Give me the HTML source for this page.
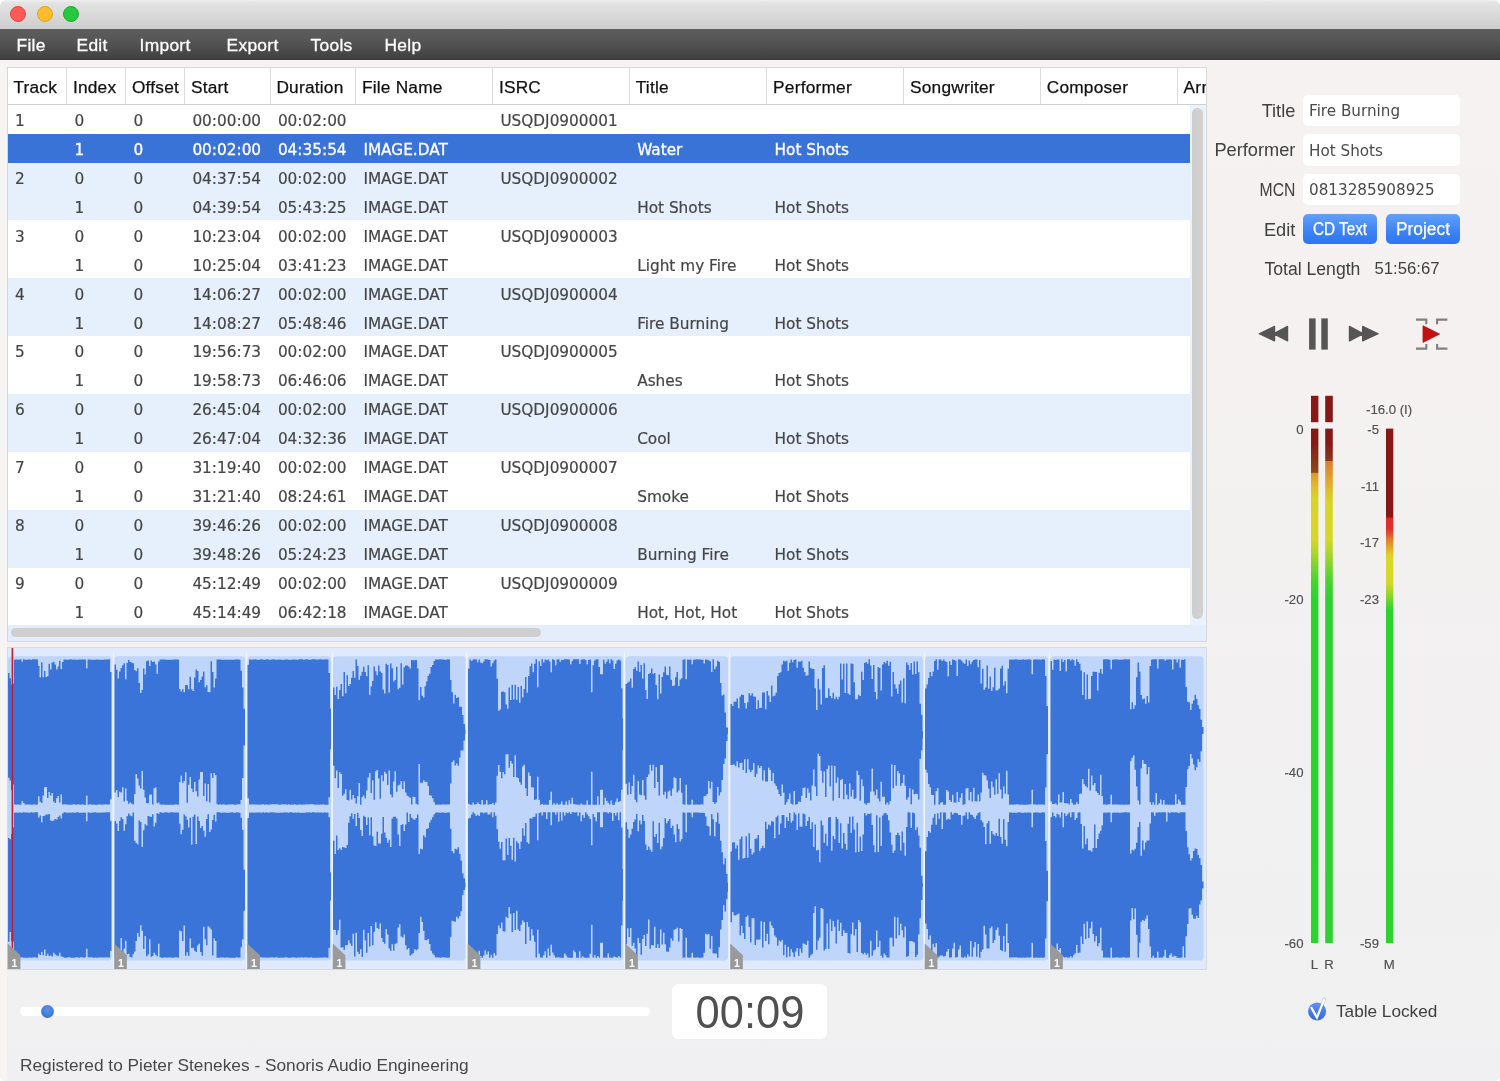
<!DOCTYPE html>
<html lang="en"><head><meta charset="utf-8"><title>Sonoris DDP Creator</title>
<style>
html,body{margin:0;padding:0;background:#fff;}
body{width:1500px;height:1081px;overflow:hidden;position:relative;}
#win{position:absolute;left:0;top:0;width:1500px;height:1081px;border-radius:6px 6px 5px 5px;overflow:hidden;will-change:transform;background:linear-gradient(#f6f2f1 60px,#f4f1f0 400px,#f1f0f1 900px,#f0f0f2);}
.t{position:absolute;white-space:nowrap;}
.b{position:absolute;box-sizing:border-box;}
svg{position:absolute;left:0;top:0;}
</style></head><body><div id="win">

<div class="b" style="left:0px;top:0px;width:1500px;height:30px;background:linear-gradient(#f0f0f0,#e3e3e3 9%,#cccccc);"></div>
<div class="b" style="left:0px;top:60px;width:7px;height:1021px;background:#f6f5f4;"></div>
<div class="b" style="left:10.3px;top:6.300000000000001px;width:16px;height:16px;border-radius:50%;background:#fc5b57;border:1px solid #e0443e;"></div>
<div class="b" style="left:36.7px;top:6.300000000000001px;width:16px;height:16px;border-radius:50%;background:#fdbc2e;border:1px solid #dea123;"></div>
<div class="b" style="left:63px;top:6.300000000000001px;width:16px;height:16px;border-radius:50%;background:#27c93f;border:1px solid #1aab29;"></div>
<div class="b" style="left:0px;top:29.2px;width:1500px;height:31.2px;background:linear-gradient(#5d5d5d,#565656 35%,#4a4a4a 70%,#434242 92%,#3b3b3b);"></div>
<div class="t" style="top:36.87px;font-size:17.4px;line-height:17.4px;color:#fff;font-family:'Liberation Sans', sans-serif;letter-spacing:0.3px;left:16.50px;-webkit-text-stroke:0.3px #fff;">File</div>
<div class="t" style="top:36.87px;font-size:17.4px;line-height:17.4px;color:#fff;font-family:'Liberation Sans', sans-serif;letter-spacing:0.3px;left:76.50px;-webkit-text-stroke:0.3px #fff;">Edit</div>
<div class="t" style="top:36.87px;font-size:17.4px;line-height:17.4px;color:#fff;font-family:'Liberation Sans', sans-serif;letter-spacing:0.3px;left:139.50px;-webkit-text-stroke:0.3px #fff;">Import</div>
<div class="t" style="top:36.87px;font-size:17.4px;line-height:17.4px;color:#fff;font-family:'Liberation Sans', sans-serif;letter-spacing:0.3px;left:226.50px;-webkit-text-stroke:0.3px #fff;">Export</div>
<div class="t" style="top:36.87px;font-size:17.4px;line-height:17.4px;color:#fff;font-family:'Liberation Sans', sans-serif;letter-spacing:0.3px;left:310.50px;-webkit-text-stroke:0.3px #fff;">Tools</div>
<div class="t" style="top:36.87px;font-size:17.4px;line-height:17.4px;color:#fff;font-family:'Liberation Sans', sans-serif;letter-spacing:0.3px;left:384.50px;-webkit-text-stroke:0.3px #fff;">Help</div>
<div class="b" style="left:7px;top:67px;width:1200px;height:575px;background:#fff;border:1px solid #d6d8dc;"></div>
<div class="b" style="left:8px;top:133.6px;width:1182px;height:28.93px;background:#3a73d8;"></div>
<div class="b" style="left:8px;top:162.6px;width:1182px;height:28.93px;background:#e6f0fd;"></div>
<div class="b" style="left:8px;top:191.5px;width:1182px;height:28.93px;background:#e6f0fd;"></div>
<div class="b" style="left:8px;top:278.3px;width:1182px;height:28.93px;background:#e6f0fd;"></div>
<div class="b" style="left:8px;top:307.2px;width:1182px;height:28.93px;background:#e6f0fd;"></div>
<div class="b" style="left:8px;top:394.0px;width:1182px;height:28.93px;background:#e6f0fd;"></div>
<div class="b" style="left:8px;top:422.9px;width:1182px;height:28.93px;background:#e6f0fd;"></div>
<div class="b" style="left:8px;top:509.7px;width:1182px;height:28.93px;background:#e6f0fd;"></div>
<div class="b" style="left:8px;top:538.6px;width:1182px;height:28.93px;background:#e6f0fd;"></div>
<div class="b" style="left:1190px;top:105px;width:16px;height:536px;background:#eaf2fd;"></div>
<div class="b" style="left:8px;top:625.4px;width:1198px;height:15.6px;background:#e4edfc;"></div>
<div class="b" style="left:1192.2px;top:108px;width:11px;height:511px;background:linear-gradient(90deg,#cdcdcd,#d2d2d2);border-radius:5.5px;"></div>
<div class="b" style="left:11px;top:627.7px;width:530px;height:9.6px;background:#cfcfcf;border-radius:5px;"></div>
<div class="b" style="left:8px;top:68px;width:1198px;height:37px;background:#fff;border-bottom:1px solid #d0d0d0;"></div>
<div class="b" style="left:66.0px;top:68px;width:1px;height:36px;background:#dcdcdc;"></div>
<div class="b" style="left:125.0px;top:68px;width:1px;height:36px;background:#dcdcdc;"></div>
<div class="b" style="left:184.0px;top:68px;width:1px;height:36px;background:#dcdcdc;"></div>
<div class="b" style="left:269.5px;top:68px;width:1px;height:36px;background:#dcdcdc;"></div>
<div class="b" style="left:355.0px;top:68px;width:1px;height:36px;background:#dcdcdc;"></div>
<div class="b" style="left:492.0px;top:68px;width:1px;height:36px;background:#dcdcdc;"></div>
<div class="b" style="left:628.8px;top:68px;width:1px;height:36px;background:#dcdcdc;"></div>
<div class="b" style="left:766.2px;top:68px;width:1px;height:36px;background:#dcdcdc;"></div>
<div class="b" style="left:903.1px;top:68px;width:1px;height:36px;background:#dcdcdc;"></div>
<div class="b" style="left:1039.8px;top:68px;width:1px;height:36px;background:#dcdcdc;"></div>
<div class="b" style="left:1176.5px;top:68px;width:1px;height:36px;background:#dcdcdc;"></div>
<div class="t" style="top:78.66px;font-size:17.3px;line-height:17.3px;color:#111;font-family:'Liberation Sans', sans-serif;letter-spacing:0.22px;left:13.40px;-webkit-text-stroke:0.25px #111;">Track</div>
<div class="t" style="top:78.66px;font-size:17.3px;line-height:17.3px;color:#111;font-family:'Liberation Sans', sans-serif;letter-spacing:0.22px;left:72.90px;-webkit-text-stroke:0.25px #111;">Index</div>
<div class="t" style="top:78.66px;font-size:17.3px;line-height:17.3px;color:#111;font-family:'Liberation Sans', sans-serif;letter-spacing:0.22px;left:131.90px;-webkit-text-stroke:0.25px #111;">Offset</div>
<div class="t" style="top:78.66px;font-size:17.3px;line-height:17.3px;color:#111;font-family:'Liberation Sans', sans-serif;letter-spacing:0.22px;left:190.90px;-webkit-text-stroke:0.25px #111;">Start</div>
<div class="t" style="top:78.66px;font-size:17.3px;line-height:17.3px;color:#111;font-family:'Liberation Sans', sans-serif;letter-spacing:0.22px;left:276.40px;-webkit-text-stroke:0.25px #111;">Duration</div>
<div class="t" style="top:78.66px;font-size:17.3px;line-height:17.3px;color:#111;font-family:'Liberation Sans', sans-serif;letter-spacing:0.22px;left:361.90px;-webkit-text-stroke:0.25px #111;">File Name</div>
<div class="t" style="top:78.66px;font-size:17.3px;line-height:17.3px;color:#111;font-family:'Liberation Sans', sans-serif;letter-spacing:0.22px;left:498.90px;-webkit-text-stroke:0.25px #111;">ISRC</div>
<div class="t" style="top:78.66px;font-size:17.3px;line-height:17.3px;color:#111;font-family:'Liberation Sans', sans-serif;letter-spacing:0.22px;left:635.70px;-webkit-text-stroke:0.25px #111;">Title</div>
<div class="t" style="top:78.66px;font-size:17.3px;line-height:17.3px;color:#111;font-family:'Liberation Sans', sans-serif;letter-spacing:0.22px;left:773.10px;-webkit-text-stroke:0.25px #111;">Performer</div>
<div class="t" style="top:78.66px;font-size:17.3px;line-height:17.3px;color:#111;font-family:'Liberation Sans', sans-serif;letter-spacing:0.22px;left:910.00px;-webkit-text-stroke:0.25px #111;">Songwriter</div>
<div class="t" style="top:78.66px;font-size:17.3px;line-height:17.3px;color:#111;font-family:'Liberation Sans', sans-serif;letter-spacing:0.22px;left:1046.70px;-webkit-text-stroke:0.25px #111;">Composer</div>
<div class="b" style="left:1177px;top:68px;width:28.5px;height:36px;overflow:hidden;">
<div class="t" style="left:6.5px;top:10.66px;font-size:17.3px;line-height:17.3px;color:#111;letter-spacing:0.3px;-webkit-text-stroke:0.25px #111;font-family:'Liberation Sans', sans-serif;">Arranger</div></div>
<div class="t" style="top:114.05px;font-size:15.3px;line-height:15.3px;color:#464646;font-family:'DejaVu Sans', 'Liberation Sans', sans-serif;left:14.90px;-webkit-text-stroke:0.2px #464646;">1</div>
<div class="t" style="top:114.05px;font-size:15.3px;line-height:15.3px;color:#464646;font-family:'DejaVu Sans', 'Liberation Sans', sans-serif;left:74.40px;-webkit-text-stroke:0.2px #464646;">0</div>
<div class="t" style="top:114.05px;font-size:15.3px;line-height:15.3px;color:#464646;font-family:'DejaVu Sans', 'Liberation Sans', sans-serif;left:133.40px;-webkit-text-stroke:0.2px #464646;">0</div>
<div class="t" style="top:114.05px;font-size:15.3px;line-height:15.3px;color:#464646;font-family:'DejaVu Sans', 'Liberation Sans', sans-serif;left:192.40px;-webkit-text-stroke:0.2px #464646;">00:00:00</div>
<div class="t" style="top:114.05px;font-size:15.3px;line-height:15.3px;color:#464646;font-family:'DejaVu Sans', 'Liberation Sans', sans-serif;left:277.90px;-webkit-text-stroke:0.2px #464646;">00:02:00</div>
<div class="t" style="top:114.05px;font-size:15.3px;line-height:15.3px;color:#464646;font-family:'DejaVu Sans', 'Liberation Sans', sans-serif;left:500.40px;-webkit-text-stroke:0.2px #464646;">USQDJ0900001</div>
<div class="t" style="top:142.98px;font-size:15.3px;line-height:15.3px;color:#fff;font-family:'DejaVu Sans', 'Liberation Sans', sans-serif;left:74.40px;-webkit-text-stroke:0.3px #fff;">1</div>
<div class="t" style="top:142.98px;font-size:15.3px;line-height:15.3px;color:#fff;font-family:'DejaVu Sans', 'Liberation Sans', sans-serif;left:133.40px;-webkit-text-stroke:0.3px #fff;">0</div>
<div class="t" style="top:142.98px;font-size:15.3px;line-height:15.3px;color:#fff;font-family:'DejaVu Sans', 'Liberation Sans', sans-serif;left:192.40px;-webkit-text-stroke:0.3px #fff;">00:02:00</div>
<div class="t" style="top:142.98px;font-size:15.3px;line-height:15.3px;color:#fff;font-family:'DejaVu Sans', 'Liberation Sans', sans-serif;left:277.90px;-webkit-text-stroke:0.3px #fff;">04:35:54</div>
<div class="t" style="top:142.98px;font-size:15.3px;line-height:15.3px;color:#fff;font-family:'DejaVu Sans', 'Liberation Sans', sans-serif;left:363.40px;-webkit-text-stroke:0.3px #fff;">IMAGE.DAT</div>
<div class="t" style="top:142.98px;font-size:15.3px;line-height:15.3px;color:#fff;font-family:'DejaVu Sans', 'Liberation Sans', sans-serif;left:637.20px;-webkit-text-stroke:0.3px #fff;">Water</div>
<div class="t" style="top:142.98px;font-size:15.3px;line-height:15.3px;color:#fff;font-family:'DejaVu Sans', 'Liberation Sans', sans-serif;left:774.60px;-webkit-text-stroke:0.3px #fff;">Hot Shots</div>
<div class="t" style="top:171.91px;font-size:15.3px;line-height:15.3px;color:#464646;font-family:'DejaVu Sans', 'Liberation Sans', sans-serif;left:14.90px;-webkit-text-stroke:0.2px #464646;">2</div>
<div class="t" style="top:171.91px;font-size:15.3px;line-height:15.3px;color:#464646;font-family:'DejaVu Sans', 'Liberation Sans', sans-serif;left:74.40px;-webkit-text-stroke:0.2px #464646;">0</div>
<div class="t" style="top:171.91px;font-size:15.3px;line-height:15.3px;color:#464646;font-family:'DejaVu Sans', 'Liberation Sans', sans-serif;left:133.40px;-webkit-text-stroke:0.2px #464646;">0</div>
<div class="t" style="top:171.91px;font-size:15.3px;line-height:15.3px;color:#464646;font-family:'DejaVu Sans', 'Liberation Sans', sans-serif;left:192.40px;-webkit-text-stroke:0.2px #464646;">04:37:54</div>
<div class="t" style="top:171.91px;font-size:15.3px;line-height:15.3px;color:#464646;font-family:'DejaVu Sans', 'Liberation Sans', sans-serif;left:277.90px;-webkit-text-stroke:0.2px #464646;">00:02:00</div>
<div class="t" style="top:171.91px;font-size:15.3px;line-height:15.3px;color:#464646;font-family:'DejaVu Sans', 'Liberation Sans', sans-serif;left:363.40px;-webkit-text-stroke:0.2px #464646;">IMAGE.DAT</div>
<div class="t" style="top:171.91px;font-size:15.3px;line-height:15.3px;color:#464646;font-family:'DejaVu Sans', 'Liberation Sans', sans-serif;left:500.40px;-webkit-text-stroke:0.2px #464646;">USQDJ0900002</div>
<div class="t" style="top:200.84px;font-size:15.3px;line-height:15.3px;color:#464646;font-family:'DejaVu Sans', 'Liberation Sans', sans-serif;left:74.40px;-webkit-text-stroke:0.2px #464646;">1</div>
<div class="t" style="top:200.84px;font-size:15.3px;line-height:15.3px;color:#464646;font-family:'DejaVu Sans', 'Liberation Sans', sans-serif;left:133.40px;-webkit-text-stroke:0.2px #464646;">0</div>
<div class="t" style="top:200.84px;font-size:15.3px;line-height:15.3px;color:#464646;font-family:'DejaVu Sans', 'Liberation Sans', sans-serif;left:192.40px;-webkit-text-stroke:0.2px #464646;">04:39:54</div>
<div class="t" style="top:200.84px;font-size:15.3px;line-height:15.3px;color:#464646;font-family:'DejaVu Sans', 'Liberation Sans', sans-serif;left:277.90px;-webkit-text-stroke:0.2px #464646;">05:43:25</div>
<div class="t" style="top:200.84px;font-size:15.3px;line-height:15.3px;color:#464646;font-family:'DejaVu Sans', 'Liberation Sans', sans-serif;left:363.40px;-webkit-text-stroke:0.2px #464646;">IMAGE.DAT</div>
<div class="t" style="top:200.84px;font-size:15.3px;line-height:15.3px;color:#464646;font-family:'DejaVu Sans', 'Liberation Sans', sans-serif;left:637.20px;-webkit-text-stroke:0.2px #464646;">Hot Shots</div>
<div class="t" style="top:200.84px;font-size:15.3px;line-height:15.3px;color:#464646;font-family:'DejaVu Sans', 'Liberation Sans', sans-serif;left:774.60px;-webkit-text-stroke:0.2px #464646;">Hot Shots</div>
<div class="t" style="top:229.77px;font-size:15.3px;line-height:15.3px;color:#464646;font-family:'DejaVu Sans', 'Liberation Sans', sans-serif;left:14.90px;-webkit-text-stroke:0.2px #464646;">3</div>
<div class="t" style="top:229.77px;font-size:15.3px;line-height:15.3px;color:#464646;font-family:'DejaVu Sans', 'Liberation Sans', sans-serif;left:74.40px;-webkit-text-stroke:0.2px #464646;">0</div>
<div class="t" style="top:229.77px;font-size:15.3px;line-height:15.3px;color:#464646;font-family:'DejaVu Sans', 'Liberation Sans', sans-serif;left:133.40px;-webkit-text-stroke:0.2px #464646;">0</div>
<div class="t" style="top:229.77px;font-size:15.3px;line-height:15.3px;color:#464646;font-family:'DejaVu Sans', 'Liberation Sans', sans-serif;left:192.40px;-webkit-text-stroke:0.2px #464646;">10:23:04</div>
<div class="t" style="top:229.77px;font-size:15.3px;line-height:15.3px;color:#464646;font-family:'DejaVu Sans', 'Liberation Sans', sans-serif;left:277.90px;-webkit-text-stroke:0.2px #464646;">00:02:00</div>
<div class="t" style="top:229.77px;font-size:15.3px;line-height:15.3px;color:#464646;font-family:'DejaVu Sans', 'Liberation Sans', sans-serif;left:363.40px;-webkit-text-stroke:0.2px #464646;">IMAGE.DAT</div>
<div class="t" style="top:229.77px;font-size:15.3px;line-height:15.3px;color:#464646;font-family:'DejaVu Sans', 'Liberation Sans', sans-serif;left:500.40px;-webkit-text-stroke:0.2px #464646;">USQDJ0900003</div>
<div class="t" style="top:258.70px;font-size:15.3px;line-height:15.3px;color:#464646;font-family:'DejaVu Sans', 'Liberation Sans', sans-serif;left:74.40px;-webkit-text-stroke:0.2px #464646;">1</div>
<div class="t" style="top:258.70px;font-size:15.3px;line-height:15.3px;color:#464646;font-family:'DejaVu Sans', 'Liberation Sans', sans-serif;left:133.40px;-webkit-text-stroke:0.2px #464646;">0</div>
<div class="t" style="top:258.70px;font-size:15.3px;line-height:15.3px;color:#464646;font-family:'DejaVu Sans', 'Liberation Sans', sans-serif;left:192.40px;-webkit-text-stroke:0.2px #464646;">10:25:04</div>
<div class="t" style="top:258.70px;font-size:15.3px;line-height:15.3px;color:#464646;font-family:'DejaVu Sans', 'Liberation Sans', sans-serif;left:277.90px;-webkit-text-stroke:0.2px #464646;">03:41:23</div>
<div class="t" style="top:258.70px;font-size:15.3px;line-height:15.3px;color:#464646;font-family:'DejaVu Sans', 'Liberation Sans', sans-serif;left:363.40px;-webkit-text-stroke:0.2px #464646;">IMAGE.DAT</div>
<div class="t" style="top:258.70px;font-size:15.3px;line-height:15.3px;color:#464646;font-family:'DejaVu Sans', 'Liberation Sans', sans-serif;left:637.20px;-webkit-text-stroke:0.2px #464646;">Light my Fire</div>
<div class="t" style="top:258.70px;font-size:15.3px;line-height:15.3px;color:#464646;font-family:'DejaVu Sans', 'Liberation Sans', sans-serif;left:774.60px;-webkit-text-stroke:0.2px #464646;">Hot Shots</div>
<div class="t" style="top:287.63px;font-size:15.3px;line-height:15.3px;color:#464646;font-family:'DejaVu Sans', 'Liberation Sans', sans-serif;left:14.90px;-webkit-text-stroke:0.2px #464646;">4</div>
<div class="t" style="top:287.63px;font-size:15.3px;line-height:15.3px;color:#464646;font-family:'DejaVu Sans', 'Liberation Sans', sans-serif;left:74.40px;-webkit-text-stroke:0.2px #464646;">0</div>
<div class="t" style="top:287.63px;font-size:15.3px;line-height:15.3px;color:#464646;font-family:'DejaVu Sans', 'Liberation Sans', sans-serif;left:133.40px;-webkit-text-stroke:0.2px #464646;">0</div>
<div class="t" style="top:287.63px;font-size:15.3px;line-height:15.3px;color:#464646;font-family:'DejaVu Sans', 'Liberation Sans', sans-serif;left:192.40px;-webkit-text-stroke:0.2px #464646;">14:06:27</div>
<div class="t" style="top:287.63px;font-size:15.3px;line-height:15.3px;color:#464646;font-family:'DejaVu Sans', 'Liberation Sans', sans-serif;left:277.90px;-webkit-text-stroke:0.2px #464646;">00:02:00</div>
<div class="t" style="top:287.63px;font-size:15.3px;line-height:15.3px;color:#464646;font-family:'DejaVu Sans', 'Liberation Sans', sans-serif;left:363.40px;-webkit-text-stroke:0.2px #464646;">IMAGE.DAT</div>
<div class="t" style="top:287.63px;font-size:15.3px;line-height:15.3px;color:#464646;font-family:'DejaVu Sans', 'Liberation Sans', sans-serif;left:500.40px;-webkit-text-stroke:0.2px #464646;">USQDJ0900004</div>
<div class="t" style="top:316.56px;font-size:15.3px;line-height:15.3px;color:#464646;font-family:'DejaVu Sans', 'Liberation Sans', sans-serif;left:74.40px;-webkit-text-stroke:0.2px #464646;">1</div>
<div class="t" style="top:316.56px;font-size:15.3px;line-height:15.3px;color:#464646;font-family:'DejaVu Sans', 'Liberation Sans', sans-serif;left:133.40px;-webkit-text-stroke:0.2px #464646;">0</div>
<div class="t" style="top:316.56px;font-size:15.3px;line-height:15.3px;color:#464646;font-family:'DejaVu Sans', 'Liberation Sans', sans-serif;left:192.40px;-webkit-text-stroke:0.2px #464646;">14:08:27</div>
<div class="t" style="top:316.56px;font-size:15.3px;line-height:15.3px;color:#464646;font-family:'DejaVu Sans', 'Liberation Sans', sans-serif;left:277.90px;-webkit-text-stroke:0.2px #464646;">05:48:46</div>
<div class="t" style="top:316.56px;font-size:15.3px;line-height:15.3px;color:#464646;font-family:'DejaVu Sans', 'Liberation Sans', sans-serif;left:363.40px;-webkit-text-stroke:0.2px #464646;">IMAGE.DAT</div>
<div class="t" style="top:316.56px;font-size:15.3px;line-height:15.3px;color:#464646;font-family:'DejaVu Sans', 'Liberation Sans', sans-serif;left:637.20px;-webkit-text-stroke:0.2px #464646;">Fire Burning</div>
<div class="t" style="top:316.56px;font-size:15.3px;line-height:15.3px;color:#464646;font-family:'DejaVu Sans', 'Liberation Sans', sans-serif;left:774.60px;-webkit-text-stroke:0.2px #464646;">Hot Shots</div>
<div class="t" style="top:345.49px;font-size:15.3px;line-height:15.3px;color:#464646;font-family:'DejaVu Sans', 'Liberation Sans', sans-serif;left:14.90px;-webkit-text-stroke:0.2px #464646;">5</div>
<div class="t" style="top:345.49px;font-size:15.3px;line-height:15.3px;color:#464646;font-family:'DejaVu Sans', 'Liberation Sans', sans-serif;left:74.40px;-webkit-text-stroke:0.2px #464646;">0</div>
<div class="t" style="top:345.49px;font-size:15.3px;line-height:15.3px;color:#464646;font-family:'DejaVu Sans', 'Liberation Sans', sans-serif;left:133.40px;-webkit-text-stroke:0.2px #464646;">0</div>
<div class="t" style="top:345.49px;font-size:15.3px;line-height:15.3px;color:#464646;font-family:'DejaVu Sans', 'Liberation Sans', sans-serif;left:192.40px;-webkit-text-stroke:0.2px #464646;">19:56:73</div>
<div class="t" style="top:345.49px;font-size:15.3px;line-height:15.3px;color:#464646;font-family:'DejaVu Sans', 'Liberation Sans', sans-serif;left:277.90px;-webkit-text-stroke:0.2px #464646;">00:02:00</div>
<div class="t" style="top:345.49px;font-size:15.3px;line-height:15.3px;color:#464646;font-family:'DejaVu Sans', 'Liberation Sans', sans-serif;left:363.40px;-webkit-text-stroke:0.2px #464646;">IMAGE.DAT</div>
<div class="t" style="top:345.49px;font-size:15.3px;line-height:15.3px;color:#464646;font-family:'DejaVu Sans', 'Liberation Sans', sans-serif;left:500.40px;-webkit-text-stroke:0.2px #464646;">USQDJ0900005</div>
<div class="t" style="top:374.42px;font-size:15.3px;line-height:15.3px;color:#464646;font-family:'DejaVu Sans', 'Liberation Sans', sans-serif;left:74.40px;-webkit-text-stroke:0.2px #464646;">1</div>
<div class="t" style="top:374.42px;font-size:15.3px;line-height:15.3px;color:#464646;font-family:'DejaVu Sans', 'Liberation Sans', sans-serif;left:133.40px;-webkit-text-stroke:0.2px #464646;">0</div>
<div class="t" style="top:374.42px;font-size:15.3px;line-height:15.3px;color:#464646;font-family:'DejaVu Sans', 'Liberation Sans', sans-serif;left:192.40px;-webkit-text-stroke:0.2px #464646;">19:58:73</div>
<div class="t" style="top:374.42px;font-size:15.3px;line-height:15.3px;color:#464646;font-family:'DejaVu Sans', 'Liberation Sans', sans-serif;left:277.90px;-webkit-text-stroke:0.2px #464646;">06:46:06</div>
<div class="t" style="top:374.42px;font-size:15.3px;line-height:15.3px;color:#464646;font-family:'DejaVu Sans', 'Liberation Sans', sans-serif;left:363.40px;-webkit-text-stroke:0.2px #464646;">IMAGE.DAT</div>
<div class="t" style="top:374.42px;font-size:15.3px;line-height:15.3px;color:#464646;font-family:'DejaVu Sans', 'Liberation Sans', sans-serif;left:637.20px;-webkit-text-stroke:0.2px #464646;">Ashes</div>
<div class="t" style="top:374.42px;font-size:15.3px;line-height:15.3px;color:#464646;font-family:'DejaVu Sans', 'Liberation Sans', sans-serif;left:774.60px;-webkit-text-stroke:0.2px #464646;">Hot Shots</div>
<div class="t" style="top:403.35px;font-size:15.3px;line-height:15.3px;color:#464646;font-family:'DejaVu Sans', 'Liberation Sans', sans-serif;left:14.90px;-webkit-text-stroke:0.2px #464646;">6</div>
<div class="t" style="top:403.35px;font-size:15.3px;line-height:15.3px;color:#464646;font-family:'DejaVu Sans', 'Liberation Sans', sans-serif;left:74.40px;-webkit-text-stroke:0.2px #464646;">0</div>
<div class="t" style="top:403.35px;font-size:15.3px;line-height:15.3px;color:#464646;font-family:'DejaVu Sans', 'Liberation Sans', sans-serif;left:133.40px;-webkit-text-stroke:0.2px #464646;">0</div>
<div class="t" style="top:403.35px;font-size:15.3px;line-height:15.3px;color:#464646;font-family:'DejaVu Sans', 'Liberation Sans', sans-serif;left:192.40px;-webkit-text-stroke:0.2px #464646;">26:45:04</div>
<div class="t" style="top:403.35px;font-size:15.3px;line-height:15.3px;color:#464646;font-family:'DejaVu Sans', 'Liberation Sans', sans-serif;left:277.90px;-webkit-text-stroke:0.2px #464646;">00:02:00</div>
<div class="t" style="top:403.35px;font-size:15.3px;line-height:15.3px;color:#464646;font-family:'DejaVu Sans', 'Liberation Sans', sans-serif;left:363.40px;-webkit-text-stroke:0.2px #464646;">IMAGE.DAT</div>
<div class="t" style="top:403.35px;font-size:15.3px;line-height:15.3px;color:#464646;font-family:'DejaVu Sans', 'Liberation Sans', sans-serif;left:500.40px;-webkit-text-stroke:0.2px #464646;">USQDJ0900006</div>
<div class="t" style="top:432.28px;font-size:15.3px;line-height:15.3px;color:#464646;font-family:'DejaVu Sans', 'Liberation Sans', sans-serif;left:74.40px;-webkit-text-stroke:0.2px #464646;">1</div>
<div class="t" style="top:432.28px;font-size:15.3px;line-height:15.3px;color:#464646;font-family:'DejaVu Sans', 'Liberation Sans', sans-serif;left:133.40px;-webkit-text-stroke:0.2px #464646;">0</div>
<div class="t" style="top:432.28px;font-size:15.3px;line-height:15.3px;color:#464646;font-family:'DejaVu Sans', 'Liberation Sans', sans-serif;left:192.40px;-webkit-text-stroke:0.2px #464646;">26:47:04</div>
<div class="t" style="top:432.28px;font-size:15.3px;line-height:15.3px;color:#464646;font-family:'DejaVu Sans', 'Liberation Sans', sans-serif;left:277.90px;-webkit-text-stroke:0.2px #464646;">04:32:36</div>
<div class="t" style="top:432.28px;font-size:15.3px;line-height:15.3px;color:#464646;font-family:'DejaVu Sans', 'Liberation Sans', sans-serif;left:363.40px;-webkit-text-stroke:0.2px #464646;">IMAGE.DAT</div>
<div class="t" style="top:432.28px;font-size:15.3px;line-height:15.3px;color:#464646;font-family:'DejaVu Sans', 'Liberation Sans', sans-serif;left:637.20px;-webkit-text-stroke:0.2px #464646;">Cool</div>
<div class="t" style="top:432.28px;font-size:15.3px;line-height:15.3px;color:#464646;font-family:'DejaVu Sans', 'Liberation Sans', sans-serif;left:774.60px;-webkit-text-stroke:0.2px #464646;">Hot Shots</div>
<div class="t" style="top:461.21px;font-size:15.3px;line-height:15.3px;color:#464646;font-family:'DejaVu Sans', 'Liberation Sans', sans-serif;left:14.90px;-webkit-text-stroke:0.2px #464646;">7</div>
<div class="t" style="top:461.21px;font-size:15.3px;line-height:15.3px;color:#464646;font-family:'DejaVu Sans', 'Liberation Sans', sans-serif;left:74.40px;-webkit-text-stroke:0.2px #464646;">0</div>
<div class="t" style="top:461.21px;font-size:15.3px;line-height:15.3px;color:#464646;font-family:'DejaVu Sans', 'Liberation Sans', sans-serif;left:133.40px;-webkit-text-stroke:0.2px #464646;">0</div>
<div class="t" style="top:461.21px;font-size:15.3px;line-height:15.3px;color:#464646;font-family:'DejaVu Sans', 'Liberation Sans', sans-serif;left:192.40px;-webkit-text-stroke:0.2px #464646;">31:19:40</div>
<div class="t" style="top:461.21px;font-size:15.3px;line-height:15.3px;color:#464646;font-family:'DejaVu Sans', 'Liberation Sans', sans-serif;left:277.90px;-webkit-text-stroke:0.2px #464646;">00:02:00</div>
<div class="t" style="top:461.21px;font-size:15.3px;line-height:15.3px;color:#464646;font-family:'DejaVu Sans', 'Liberation Sans', sans-serif;left:363.40px;-webkit-text-stroke:0.2px #464646;">IMAGE.DAT</div>
<div class="t" style="top:461.21px;font-size:15.3px;line-height:15.3px;color:#464646;font-family:'DejaVu Sans', 'Liberation Sans', sans-serif;left:500.40px;-webkit-text-stroke:0.2px #464646;">USQDJ0900007</div>
<div class="t" style="top:490.14px;font-size:15.3px;line-height:15.3px;color:#464646;font-family:'DejaVu Sans', 'Liberation Sans', sans-serif;left:74.40px;-webkit-text-stroke:0.2px #464646;">1</div>
<div class="t" style="top:490.14px;font-size:15.3px;line-height:15.3px;color:#464646;font-family:'DejaVu Sans', 'Liberation Sans', sans-serif;left:133.40px;-webkit-text-stroke:0.2px #464646;">0</div>
<div class="t" style="top:490.14px;font-size:15.3px;line-height:15.3px;color:#464646;font-family:'DejaVu Sans', 'Liberation Sans', sans-serif;left:192.40px;-webkit-text-stroke:0.2px #464646;">31:21:40</div>
<div class="t" style="top:490.14px;font-size:15.3px;line-height:15.3px;color:#464646;font-family:'DejaVu Sans', 'Liberation Sans', sans-serif;left:277.90px;-webkit-text-stroke:0.2px #464646;">08:24:61</div>
<div class="t" style="top:490.14px;font-size:15.3px;line-height:15.3px;color:#464646;font-family:'DejaVu Sans', 'Liberation Sans', sans-serif;left:363.40px;-webkit-text-stroke:0.2px #464646;">IMAGE.DAT</div>
<div class="t" style="top:490.14px;font-size:15.3px;line-height:15.3px;color:#464646;font-family:'DejaVu Sans', 'Liberation Sans', sans-serif;left:637.20px;-webkit-text-stroke:0.2px #464646;">Smoke</div>
<div class="t" style="top:490.14px;font-size:15.3px;line-height:15.3px;color:#464646;font-family:'DejaVu Sans', 'Liberation Sans', sans-serif;left:774.60px;-webkit-text-stroke:0.2px #464646;">Hot Shots</div>
<div class="t" style="top:519.07px;font-size:15.3px;line-height:15.3px;color:#464646;font-family:'DejaVu Sans', 'Liberation Sans', sans-serif;left:14.90px;-webkit-text-stroke:0.2px #464646;">8</div>
<div class="t" style="top:519.07px;font-size:15.3px;line-height:15.3px;color:#464646;font-family:'DejaVu Sans', 'Liberation Sans', sans-serif;left:74.40px;-webkit-text-stroke:0.2px #464646;">0</div>
<div class="t" style="top:519.07px;font-size:15.3px;line-height:15.3px;color:#464646;font-family:'DejaVu Sans', 'Liberation Sans', sans-serif;left:133.40px;-webkit-text-stroke:0.2px #464646;">0</div>
<div class="t" style="top:519.07px;font-size:15.3px;line-height:15.3px;color:#464646;font-family:'DejaVu Sans', 'Liberation Sans', sans-serif;left:192.40px;-webkit-text-stroke:0.2px #464646;">39:46:26</div>
<div class="t" style="top:519.07px;font-size:15.3px;line-height:15.3px;color:#464646;font-family:'DejaVu Sans', 'Liberation Sans', sans-serif;left:277.90px;-webkit-text-stroke:0.2px #464646;">00:02:00</div>
<div class="t" style="top:519.07px;font-size:15.3px;line-height:15.3px;color:#464646;font-family:'DejaVu Sans', 'Liberation Sans', sans-serif;left:363.40px;-webkit-text-stroke:0.2px #464646;">IMAGE.DAT</div>
<div class="t" style="top:519.07px;font-size:15.3px;line-height:15.3px;color:#464646;font-family:'DejaVu Sans', 'Liberation Sans', sans-serif;left:500.40px;-webkit-text-stroke:0.2px #464646;">USQDJ0900008</div>
<div class="t" style="top:548.00px;font-size:15.3px;line-height:15.3px;color:#464646;font-family:'DejaVu Sans', 'Liberation Sans', sans-serif;left:74.40px;-webkit-text-stroke:0.2px #464646;">1</div>
<div class="t" style="top:548.00px;font-size:15.3px;line-height:15.3px;color:#464646;font-family:'DejaVu Sans', 'Liberation Sans', sans-serif;left:133.40px;-webkit-text-stroke:0.2px #464646;">0</div>
<div class="t" style="top:548.00px;font-size:15.3px;line-height:15.3px;color:#464646;font-family:'DejaVu Sans', 'Liberation Sans', sans-serif;left:192.40px;-webkit-text-stroke:0.2px #464646;">39:48:26</div>
<div class="t" style="top:548.00px;font-size:15.3px;line-height:15.3px;color:#464646;font-family:'DejaVu Sans', 'Liberation Sans', sans-serif;left:277.90px;-webkit-text-stroke:0.2px #464646;">05:24:23</div>
<div class="t" style="top:548.00px;font-size:15.3px;line-height:15.3px;color:#464646;font-family:'DejaVu Sans', 'Liberation Sans', sans-serif;left:363.40px;-webkit-text-stroke:0.2px #464646;">IMAGE.DAT</div>
<div class="t" style="top:548.00px;font-size:15.3px;line-height:15.3px;color:#464646;font-family:'DejaVu Sans', 'Liberation Sans', sans-serif;left:637.20px;-webkit-text-stroke:0.2px #464646;">Burning Fire</div>
<div class="t" style="top:548.00px;font-size:15.3px;line-height:15.3px;color:#464646;font-family:'DejaVu Sans', 'Liberation Sans', sans-serif;left:774.60px;-webkit-text-stroke:0.2px #464646;">Hot Shots</div>
<div class="t" style="top:576.93px;font-size:15.3px;line-height:15.3px;color:#464646;font-family:'DejaVu Sans', 'Liberation Sans', sans-serif;left:14.90px;-webkit-text-stroke:0.2px #464646;">9</div>
<div class="t" style="top:576.93px;font-size:15.3px;line-height:15.3px;color:#464646;font-family:'DejaVu Sans', 'Liberation Sans', sans-serif;left:74.40px;-webkit-text-stroke:0.2px #464646;">0</div>
<div class="t" style="top:576.93px;font-size:15.3px;line-height:15.3px;color:#464646;font-family:'DejaVu Sans', 'Liberation Sans', sans-serif;left:133.40px;-webkit-text-stroke:0.2px #464646;">0</div>
<div class="t" style="top:576.93px;font-size:15.3px;line-height:15.3px;color:#464646;font-family:'DejaVu Sans', 'Liberation Sans', sans-serif;left:192.40px;-webkit-text-stroke:0.2px #464646;">45:12:49</div>
<div class="t" style="top:576.93px;font-size:15.3px;line-height:15.3px;color:#464646;font-family:'DejaVu Sans', 'Liberation Sans', sans-serif;left:277.90px;-webkit-text-stroke:0.2px #464646;">00:02:00</div>
<div class="t" style="top:576.93px;font-size:15.3px;line-height:15.3px;color:#464646;font-family:'DejaVu Sans', 'Liberation Sans', sans-serif;left:363.40px;-webkit-text-stroke:0.2px #464646;">IMAGE.DAT</div>
<div class="t" style="top:576.93px;font-size:15.3px;line-height:15.3px;color:#464646;font-family:'DejaVu Sans', 'Liberation Sans', sans-serif;left:500.40px;-webkit-text-stroke:0.2px #464646;">USQDJ0900009</div>
<div class="t" style="top:605.86px;font-size:15.3px;line-height:15.3px;color:#464646;font-family:'DejaVu Sans', 'Liberation Sans', sans-serif;left:74.40px;-webkit-text-stroke:0.2px #464646;">1</div>
<div class="t" style="top:605.86px;font-size:15.3px;line-height:15.3px;color:#464646;font-family:'DejaVu Sans', 'Liberation Sans', sans-serif;left:133.40px;-webkit-text-stroke:0.2px #464646;">0</div>
<div class="t" style="top:605.86px;font-size:15.3px;line-height:15.3px;color:#464646;font-family:'DejaVu Sans', 'Liberation Sans', sans-serif;left:192.40px;-webkit-text-stroke:0.2px #464646;">45:14:49</div>
<div class="t" style="top:605.86px;font-size:15.3px;line-height:15.3px;color:#464646;font-family:'DejaVu Sans', 'Liberation Sans', sans-serif;left:277.90px;-webkit-text-stroke:0.2px #464646;">06:42:18</div>
<div class="t" style="top:605.86px;font-size:15.3px;line-height:15.3px;color:#464646;font-family:'DejaVu Sans', 'Liberation Sans', sans-serif;left:363.40px;-webkit-text-stroke:0.2px #464646;">IMAGE.DAT</div>
<div class="t" style="top:605.86px;font-size:15.3px;line-height:15.3px;color:#464646;font-family:'DejaVu Sans', 'Liberation Sans', sans-serif;left:637.20px;-webkit-text-stroke:0.2px #464646;">Hot, Hot, Hot</div>
<div class="t" style="top:605.86px;font-size:15.3px;line-height:15.3px;color:#464646;font-family:'DejaVu Sans', 'Liberation Sans', sans-serif;left:774.60px;-webkit-text-stroke:0.2px #464646;">Hot Shots</div>
<div class="b" style="left:7px;top:647px;width:1200px;height:323px;background:#e0eafc;border:1px solid #d6dae0;"></div>
<svg width="1500" height="1081" viewBox="0 0 1500 1081">
<rect x="8.0" y="656.2" width="103.5" height="304.4" rx="3.5" fill="#bfd5fa"/>
<rect x="114.5" y="656.2" width="130.5" height="304.4" rx="3.5" fill="#bfd5fa"/>
<rect x="247.5" y="656.2" width="83.5" height="304.4" rx="3.5" fill="#bfd5fa"/>
<rect x="333.0" y="656.2" width="132.5" height="304.4" rx="3.5" fill="#bfd5fa"/>
<rect x="468.0" y="656.2" width="155.0" height="304.4" rx="3.5" fill="#bfd5fa"/>
<rect x="625.5" y="656.2" width="102.5" height="304.4" rx="3.5" fill="#bfd5fa"/>
<rect x="730.5" y="656.2" width="192.5" height="304.4" rx="3.5" fill="#bfd5fa"/>
<rect x="925.0" y="656.2" width="123.0" height="304.4" rx="3.5" fill="#bfd5fa"/>
<rect x="1050.5" y="656.2" width="153.0" height="304.4" rx="3.5" fill="#bfd5fa"/>
<rect x="113" y="652" width="1" height="317" fill="#eef4fe"/>
<rect x="246" y="652" width="1" height="317" fill="#eef4fe"/>
<rect x="332" y="652" width="1" height="317" fill="#eef4fe"/>
<rect x="466" y="652" width="1" height="317" fill="#eef4fe"/>
<rect x="624" y="652" width="1" height="317" fill="#eef4fe"/>
<rect x="729" y="652" width="1" height="317" fill="#eef4fe"/>
<rect x="924" y="652" width="1" height="317" fill="#eef4fe"/>
<rect x="1049" y="652" width="1" height="317" fill="#eef4fe"/>
<g fill="#3a74d8">
<path d="M8.0 673.0H9.5V678.3H11.0V684.6H12.5V683.5H14.0V659.7H15.5V659.5H17.0V659.8H18.5V659.6H20.0V659.3H21.5V661.7H23.0V659.3H24.5V659.8H26.0V659.8H27.5V659.4H29.0V659.4H30.5V659.7H32.0V659.3H33.5V659.3H35.0V659.3H36.5V659.4H38.0V665.7H39.5V677.2H41.0V662.3H42.5V677.2H44.0V670.9H45.5V676.9H47.0V676.2H48.5V663.8H50.0V669.5H51.5V662.6H53.0V661.7H54.5V664.6H56.0V669.6H57.5V666.4H59.0V660.8H60.5V668.9H62.0V662.1H63.5V659.4H65.0V659.5H66.5V659.7H68.0V659.8H69.5V659.3H71.0V659.6H72.5V659.8H74.0V659.6H75.5V659.7H77.0V659.7H78.5V659.6H80.0V659.4H81.5V659.6H83.0V659.6H84.5V659.4H86.0V668.3H87.5V659.4H89.0V659.5H90.5V659.7H92.0V659.8H93.5V659.8H95.0V659.7H96.5V659.4H98.0V659.8H99.5V659.8H101.0V659.7H102.5V659.7H104.0V659.6H105.5V659.5H107.0V659.6H108.5V659.3H110.0V672.1H111.5V799.3H110.0V804.3H108.5V804.7H107.0V804.3H105.5V804.4H104.0V804.5H102.5V804.7H101.0V804.5H99.5V804.6H98.0V804.8H96.5V804.8H95.0V804.5H93.5V804.7H92.0V804.6H90.5V804.3H89.0V804.7H87.5V795.8H86.0V804.8H84.5V804.8H83.0V804.3H81.5V804.8H80.0V804.5H78.5V804.3H77.0V804.7H75.5V804.3H74.0V804.3H72.5V804.8H71.0V804.7H69.5V804.7H68.0V804.4H66.5V804.6H65.0V804.3H63.5V804.6H62.0V794.6H60.5V802.5H59.0V796.1H57.5V798.3H56.0V802.9H54.5V801.4H53.0V793.0H51.5V795.4H50.0V792.0H48.5V798.1H47.0V787.1H45.5V787.3H44.0V795.5H42.5V802.9H41.0V801.7H39.5V796.2H38.0V804.6H36.5V804.7H35.0V804.3H33.5V804.8H32.0V804.7H30.5V804.6H29.0V804.6H27.5V804.4H26.0V804.4H24.5V803.1H23.0V801.1H21.5V804.8H20.0V804.8H18.5V804.3H17.0V804.8H15.5V804.4H14.0V784.5H12.5V790.2H11.0V780.5H9.5V777.8H8.0Z"/>
<path d="M8.0 837.9H9.5V839.2H11.0V834.0H12.5V827.4H14.0V812.7H15.5V812.5H17.0V812.8H18.5V812.4H20.0V812.6H21.5V812.7H23.0V812.3H24.5V812.4H26.0V812.5H27.5V812.4H29.0V812.8H30.5V812.3H32.0V812.5H33.5V812.4H35.0V812.3H36.5V812.3H38.0V817.4H39.5V815.5H41.0V822.2H42.5V816.0H44.0V815.8H45.5V814.6H47.0V814.4H48.5V814.1H50.0V820.5H51.5V820.9H53.0V820.6H54.5V819.0H56.0V819.6H57.5V817.1H59.0V815.6H60.5V818.5H62.0V813.4H63.5V812.3H65.0V812.6H66.5V812.8H68.0V812.7H69.5V812.6H71.0V812.7H72.5V812.4H74.0V812.7H75.5V812.6H77.0V812.3H78.5V812.8H80.0V812.8H81.5V812.7H83.0V812.4H84.5V812.7H86.0V821.3H87.5V812.3H89.0V812.8H90.5V812.7H92.0V812.4H93.5V812.5H95.0V812.3H96.5V812.8H98.0V812.4H99.5V812.8H101.0V812.5H102.5V812.6H104.0V812.4H105.5V812.3H107.0V812.3H108.5V812.3H110.0V820.7H111.5V951.1H110.0V957.4H108.5V957.6H107.0V957.3H105.5V957.4H104.0V957.5H102.5V957.5H101.0V957.5H99.5V957.4H98.0V957.7H96.5V957.6H95.0V957.8H93.5V957.4H92.0V957.3H90.5V957.4H89.0V957.3H87.5V948.8H86.0V957.3H84.5V957.8H83.0V957.3H81.5V957.3H80.0V957.8H78.5V957.6H77.0V957.3H75.5V957.8H74.0V957.7H72.5V957.7H71.0V957.4H69.5V957.3H68.0V957.4H66.5V957.7H65.0V957.8H63.5V956.7H62.0V956.5H60.5V952.7H59.0V956.0H57.5V955.4H56.0V954.4H54.5V952.8H53.0V956.4H51.5V955.4H50.0V956.0H48.5V953.7H47.0V956.1H45.5V949.4H44.0V955.2H42.5V952.1H41.0V954.9H39.5V953.7H38.0V957.8H36.5V957.4H35.0V957.3H33.5V957.6H32.0V957.7H30.5V957.6H29.0V957.8H27.5V957.7H26.0V957.8H24.5V957.7H23.0V957.3H21.5V957.4H20.0V957.4H18.5V957.3H17.0V957.3H15.5V957.4H14.0V941.5H12.5V941.2H11.0V932.0H9.5V941.7H8.0Z"/>
<path d="M114.5 664.4H116.0V669.8H117.5V678.6H119.0V671.4H120.5V668.0H122.0V665.2H123.5V663.2H125.0V679.3H126.5V662.7H128.0V659.9H129.5V661.9H131.0V662.5H132.5V663.2H134.0V669.9H135.5V671.3H137.0V668.2H138.5V683.0H140.0V693.0H141.5V689.8H143.0V668.6H144.5V674.6H146.0V661.3H147.5V660.6H149.0V666.1H150.5V660.5H152.0V662.0H153.5V661.6H155.0V664.4H156.5V673.8H158.0V661.4H159.5V659.6H161.0V659.5H162.5V659.4H164.0V659.4H165.5V659.7H167.0V659.8H168.5V659.7H170.0V659.8H171.5V659.7H173.0V659.4H174.5V659.4H176.0V659.6H177.5V659.6H179.0V688.9H180.5V691.6H182.0V689.3H183.5V692.3H185.0V684.9H186.5V685.2H188.0V689.3H189.5V676.7H191.0V689.3H192.5V691.1H194.0V677.4H195.5V669.5H197.0V671.1H198.5V682.2H200.0V680.0H201.5V676.6H203.0V671.5H204.5V687.3H206.0V685.3H207.5V692.0H209.0V692.2H210.5V661.3H212.0V672.0H213.5V687.5H215.0V678.6H216.5V659.6H218.0V659.4H219.5V659.5H221.0V659.8H222.5V659.7H224.0V659.8H225.5V659.8H227.0V659.8H228.5V659.8H230.0V659.8H231.5V659.8H233.0V659.8H234.5V659.5H236.0V659.5H237.5V659.5H239.0V659.7H240.5V670.7H242.0V687.5H243.5V708.8H245.0V745.6H243.5V778.1H242.0V800.0H240.5V804.3H239.0V804.3H237.5V804.6H236.0V804.8H234.5V804.4H233.0V804.3H231.5V804.6H230.0V804.6H228.5V804.5H227.0V804.8H225.5V804.6H224.0V804.3H222.5V804.7H221.0V804.3H219.5V804.8H218.0V804.3H216.5V775.3H215.0V773.0H213.5V778.1H212.0V773.2H210.5V802.5H209.0V783.9H207.5V801.3H206.0V783.5H204.5V796.1H203.0V772.0H201.5V771.9H200.0V779.4H198.5V796.5H197.0V791.3H195.5V781.9H194.0V791.9H192.5V788.5H191.0V776.9H189.5V784.8H188.0V802.8H186.5V772.3H185.0V781.0H183.5V782.8H182.0V775.7H180.5V782.2H179.0V804.8H177.5V804.5H176.0V804.4H174.5V804.7H173.0V804.7H171.5V804.8H170.0V804.7H168.5V804.7H167.0V804.7H165.5V804.8H164.0V804.4H162.5V804.7H161.0V804.6H159.5V802.5H158.0V803.2H156.5V787.4H155.0V788.2H153.5V804.5H152.0V794.4H150.5V794.8H149.0V803.3H147.5V803.0H146.0V797.5H144.5V789.8H143.0V770.9H141.5V788.5H140.0V785.4H138.5V778.4H137.0V774.0H135.5V793.9H134.0V804.6H132.5V803.4H131.0V802.4H129.5V803.7H128.0V800.8H126.5V788.4H125.0V801.5H123.5V787.2H122.0V792.4H120.5V791.8H119.0V797.1H117.5V790.0H116.0V792.6H114.5Z"/>
<path d="M114.5 821.0H116.0V823.6H117.5V830.9H119.0V821.0H120.5V817.3H122.0V819.0H123.5V830.7H125.0V824.2H126.5V816.2H128.0V813.5H129.5V815.5H131.0V816.3H132.5V812.4H134.0V840.7H135.5V843.1H137.0V844.5H138.5V820.6H140.0V822.0H141.5V846.8H143.0V830.3H144.5V824.2H146.0V825.5H147.5V816.0H149.0V816.6H150.5V817.0H152.0V814.2H153.5V826.6H155.0V822.8H156.5V813.2H158.0V813.7H159.5V812.3H161.0V812.5H162.5V812.7H164.0V812.5H165.5V812.3H167.0V812.6H168.5V812.7H170.0V812.3H171.5V812.3H173.0V812.5H174.5V812.5H176.0V812.6H177.5V812.6H179.0V823.5H180.5V834.2H182.0V829.7H183.5V814.6H185.0V816.2H186.5V819.8H188.0V827.6H189.5V817.8H191.0V844.5H192.5V816.7H194.0V814.4H195.5V843.9H197.0V816.5H198.5V821.0H200.0V828.1H201.5V825.9H203.0V830.8H204.5V836.8H206.0V818.9H207.5V814.3H209.0V832.1H210.5V829.5H212.0V819.9H213.5V814.7H215.0V821.6H216.5V812.3H218.0V812.3H219.5V812.4H221.0V812.7H222.5V812.5H224.0V812.4H225.5V812.7H227.0V812.7H228.5V812.8H230.0V812.6H231.5V812.3H233.0V812.8H234.5V812.8H236.0V812.3H237.5V812.4H239.0V812.7H240.5V817.8H242.0V829.8H243.5V869.7H245.0V910.7H243.5V939.5H242.0V947.3H240.5V957.5H239.0V957.8H237.5V957.3H236.0V957.7H234.5V957.8H233.0V957.8H231.5V957.7H230.0V957.7H228.5V957.5H227.0V957.6H225.5V957.8H224.0V957.5H222.5V957.4H221.0V957.5H219.5V957.7H218.0V957.7H216.5V941.0H215.0V938.4H213.5V955.5H212.0V929.5H210.5V927.4H209.0V926.2H207.5V945.2H206.0V939.3H204.5V926.8H203.0V955.7H201.5V951.9H200.0V943.8H198.5V945.5H197.0V951.9H195.5V950.7H194.0V947.7H192.5V948.1H191.0V938.4H189.5V955.8H188.0V952.2H186.5V955.7H185.0V925.6H183.5V941.0H182.0V931.3H180.5V930.8H179.0V957.8H177.5V957.3H176.0V957.3H174.5V957.8H173.0V957.8H171.5V957.6H170.0V957.6H168.5V957.5H167.0V957.8H165.5V957.3H164.0V957.8H162.5V957.8H161.0V957.3H159.5V943.8H158.0V956.2H156.5V954.8H155.0V952.7H153.5V955.9H152.0V956.8H150.5V939.2H149.0V954.5H147.5V956.2H146.0V936.1H144.5V948.9H143.0V930.8H141.5V925.3H140.0V936.8H138.5V933.1H137.0V940.9H135.5V951.6H134.0V954.3H132.5V957.5H131.0V957.1H129.5V953.8H128.0V954.3H126.5V940.7H125.0V948.8H123.5V954.7H122.0V938.0H120.5V950.5H119.0V947.9H117.5V950.9H116.0V954.7H114.5Z"/>
<path d="M247.5 664.7H249.0V659.3H250.5V659.7H252.0V659.4H253.5V659.6H255.0V659.3H256.5V659.8H258.0V659.7H259.5V659.4H261.0V659.3H262.5V659.8H264.0V659.8H265.5V659.4H267.0V659.3H268.5V659.8H270.0V659.8H271.5V659.5H273.0V659.3H274.5V659.7H276.0V659.8H277.5V659.4H279.0V659.5H280.5V659.8H282.0V659.7H283.5V659.8H285.0V659.6H286.5V659.4H288.0V659.8H289.5V659.8H291.0V659.8H292.5V659.4H294.0V659.4H295.5V659.8H297.0V659.8H298.5V659.3H300.0V659.3H301.5V659.3H303.0V659.7H304.5V659.4H306.0V659.3H307.5V659.6H309.0V659.8H310.5V659.5H312.0V659.3H313.5V659.3H315.0V659.4H316.5V659.4H318.0V659.4H319.5V659.3H321.0V659.4H322.5V659.4H324.0V659.4H325.5V659.3H327.0V659.6H328.5V672.9H330.0V708.4H331.0V749.2H330.0V797.3H328.5V804.7H327.0V804.7H325.5V804.7H324.0V804.3H322.5V804.7H321.0V804.4H319.5V804.8H318.0V804.4H316.5V804.8H315.0V804.4H313.5V804.3H312.0V804.3H310.5V804.3H309.0V804.6H307.5V804.3H306.0V804.4H304.5V804.6H303.0V804.7H301.5V804.4H300.0V804.6H298.5V804.7H297.0V804.7H295.5V804.3H294.0V804.7H292.5V804.4H291.0V804.8H289.5V804.3H288.0V804.8H286.5V804.3H285.0V804.6H283.5V804.3H282.0V804.6H280.5V804.7H279.0V804.6H277.5V804.3H276.0V804.3H274.5V804.3H273.0V804.3H271.5V804.4H270.0V804.5H268.5V804.7H267.0V804.3H265.5V804.7H264.0V804.3H262.5V804.4H261.0V804.4H259.5V804.7H258.0V804.6H256.5V804.5H255.0V804.4H253.5V804.3H252.0V804.4H250.5V804.6H249.0V798.2H247.5Z"/>
<path d="M247.5 818.1H249.0V812.7H250.5V812.4H252.0V812.5H253.5V812.7H255.0V812.5H256.5V812.6H258.0V812.4H259.5V812.4H261.0V812.8H262.5V812.3H264.0V812.7H265.5V812.3H267.0V812.8H268.5V812.4H270.0V812.5H271.5V812.3H273.0V812.5H274.5V812.5H276.0V812.8H277.5V812.8H279.0V812.7H280.5V812.6H282.0V812.8H283.5V812.3H285.0V812.4H286.5V812.5H288.0V812.8H289.5V812.3H291.0V812.3H292.5V812.8H294.0V812.4H295.5V812.8H297.0V812.5H298.5V812.8H300.0V812.7H301.5V812.7H303.0V812.7H304.5V812.8H306.0V812.3H307.5V812.5H309.0V812.3H310.5V812.8H312.0V812.3H313.5V812.3H315.0V812.8H316.5V812.3H318.0V812.4H319.5V812.5H321.0V812.5H322.5V812.7H324.0V812.3H325.5V812.8H327.0V812.6H328.5V817.3H330.0V872.3H331.0V900.5H330.0V947.7H328.5V957.7H327.0V957.4H325.5V957.5H324.0V957.5H322.5V957.8H321.0V957.5H319.5V957.7H318.0V957.8H316.5V957.8H315.0V957.7H313.5V957.8H312.0V957.3H310.5V957.8H309.0V957.5H307.5V957.6H306.0V957.3H304.5V957.8H303.0V957.3H301.5V957.4H300.0V957.6H298.5V957.5H297.0V957.8H295.5V957.5H294.0V957.5H292.5V957.4H291.0V957.7H289.5V957.8H288.0V957.5H286.5V957.3H285.0V957.5H283.5V957.7H282.0V957.4H280.5V957.7H279.0V957.7H277.5V957.3H276.0V957.3H274.5V957.7H273.0V957.3H271.5V957.6H270.0V957.5H268.5V957.8H267.0V957.4H265.5V957.4H264.0V957.4H262.5V957.5H261.0V957.3H259.5V957.6H258.0V957.3H256.5V957.5H255.0V957.8H253.5V957.5H252.0V957.7H250.5V957.5H249.0V952.8H247.5Z"/>
<path d="M333.0 687.6H334.5V695.1H336.0V686.8H337.5V699.1H339.0V689.9H340.5V684.1H342.0V696.2H343.5V672.0H345.0V693.3H346.5V675.3H348.0V686.1H349.5V684.0H351.0V677.7H352.5V670.9H354.0V677.7H355.5V659.4H357.0V666.0H358.5V679.7H360.0V675.8H361.5V671.8H363.0V666.7H364.5V672.0H366.0V676.3H367.5V665.3H369.0V694.8H370.5V686.5H372.0V681.0H373.5V666.5H375.0V671.3H376.5V675.2H378.0V665.5H379.5V671.6H381.0V672.9H382.5V689.4H384.0V693.6H385.5V663.8H387.0V665.1H388.5V692.5H390.0V663.6H391.5V668.3H393.0V681.6H394.5V680.1H396.0V666.8H397.5V689.2H399.0V687.7H400.5V663.3H402.0V684.5H403.5V667.3H405.0V665.4H406.5V665.5H408.0V666.6H409.5V668.4H411.0V660.1H412.5V660.2H414.0V660.3H415.5V660.1H417.0V668.2H418.5V700.2H420.0V686.9H421.5V695.8H423.0V697.5H424.5V686.2H426.0V681.4H427.5V675.8H429.0V673.7H430.5V667.0H432.0V665.1H433.5V660.9H435.0V659.5H436.5V659.5H438.0V659.5H439.5V659.3H441.0V659.5H442.5V659.5H444.0V659.8H445.5V659.7H447.0V659.3H448.5V659.5H450.0V680.1H451.5V692.3H453.0V703.5H454.5V694.8H456.0V698.0H457.5V697.2H459.0V706.8H460.5V706.8H462.0V715.0H463.5V724.1H465.0V729.7H465.5V733.9H465.0V740.4H463.5V750.4H462.0V750.5H460.5V757.7H459.0V765.7H457.5V763.6H456.0V765.6H454.5V760.5H453.0V761.9H451.5V783.6H450.0V804.4H448.5V804.4H447.0V804.4H445.5V804.5H444.0V804.5H442.5V804.4H441.0V804.7H439.5V804.4H438.0V804.7H436.5V804.7H435.0V802.2H433.5V798.3H432.0V795.8H430.5V795.3H429.0V786.0H427.5V781.7H426.0V782.0H424.5V780.3H423.0V782.7H421.5V782.7H420.0V764.1H418.5V804.7H417.0V803.7H415.5V797.1H414.0V796.7H412.5V804.6H411.0V797.7H409.5V796.4H408.0V795.8H406.5V792.6H405.0V781.5H403.5V789.0H402.0V781.1H400.5V784.8H399.0V785.5H397.5V791.7H396.0V771.2H394.5V781.4H393.0V797.2H391.5V794.6H390.0V770.4H388.5V784.9H387.0V773.8H385.5V771.8H384.0V781.3H382.5V775.3H381.0V798.7H379.5V778.5H378.0V770.0H376.5V771.4H375.0V799.7H373.5V780.2H372.0V792.9H370.5V773.0H369.0V777.5H367.5V790.5H366.0V798.6H364.5V795.5H363.0V797.1H361.5V804.8H360.0V782.9H358.5V796.3H357.0V803.6H355.5V798.2H354.0V795.1H352.5V799.4H351.0V789.7H349.5V800.5H348.0V799.9H346.5V789.2H345.0V793.7H343.5V795.8H342.0V774.0H340.5V772.3H339.0V788.1H337.5V770.6H336.0V778.2H334.5V765.8H333.0Z"/>
<path d="M333.0 840.7H334.5V854.1H336.0V835.6H337.5V850.1H339.0V848.2H340.5V850.1H342.0V846.9H343.5V847.4H345.0V847.9H346.5V844.9H348.0V822.8H349.5V816.3H351.0V813.3H352.5V818.8H354.0V813.9H355.5V826.1H357.0V812.7H358.5V818.1H360.0V830.1H361.5V836.1H363.0V815.7H364.5V816.9H366.0V825.1H367.5V817.5H369.0V835.3H370.5V817.3H372.0V836.5H373.5V845.6H375.0V845.9H376.5V831.8H378.0V843.5H379.5V843.4H381.0V833.8H382.5V817.1H384.0V832.6H385.5V837.7H387.0V842.8H388.5V839.7H390.0V846.9H391.5V818.4H393.0V816.7H394.5V816.7H396.0V818.5H397.5V834.5H399.0V846.0H400.5V824.9H402.0V824.3H403.5V831.0H405.0V824.4H406.5V812.5H408.0V822.1H409.5V814.0H411.0V817.8H412.5V819.3H414.0V819.8H415.5V818.1H417.0V814.4H418.5V854.0H420.0V848.7H421.5V849.3H423.0V835.3H424.5V837.3H426.0V828.9H427.5V828.2H429.0V822.5H430.5V819.8H432.0V817.3H433.5V814.2H435.0V812.8H436.5V812.6H438.0V812.5H439.5V812.8H441.0V812.6H442.5V812.5H444.0V812.8H445.5V812.8H447.0V812.6H448.5V812.5H450.0V828.8H451.5V851.3H453.0V853.2H454.5V848.7H456.0V849.6H457.5V847.2H459.0V854.1H460.5V860.4H462.0V873.3H463.5V878.2H465.0V882.7H465.5V887.5H465.0V889.9H463.5V895.1H462.0V911.2H460.5V915.9H459.0V918.4H457.5V916.7H456.0V921.8H454.5V921.2H453.0V920.7H451.5V937.3H450.0V957.5H448.5V957.8H447.0V957.6H445.5V957.4H444.0V957.3H442.5V957.6H441.0V957.8H439.5V957.6H438.0V957.3H436.5V957.4H435.0V955.3H433.5V953.6H432.0V950.8H430.5V944.0H429.0V939.1H427.5V940.3H426.0V940.1H424.5V930.8H423.0V922.1H421.5V916.8H420.0V932.9H418.5V949.2H417.0V950.3H415.5V949.2H414.0V953.1H412.5V954.6H411.0V955.4H409.5V947.9H408.0V949.5H406.5V945.3H405.0V934.4H403.5V937.4H402.0V936.4H400.5V924.2H399.0V927.4H397.5V943.3H396.0V943.8H394.5V950.5H393.0V944.3H391.5V950.8H390.0V948.4H388.5V934.6H387.0V929.2H385.5V943.8H384.0V942.0H382.5V937.9H381.0V923.4H379.5V928.9H378.0V928.1H376.5V922.3H375.0V931.7H373.5V945.2H372.0V926.0H370.5V946.5H369.0V933.0H367.5V952.8H366.0V940.6H364.5V929.7H363.0V957.0H361.5V949.2H360.0V954.0H358.5V951.7H357.0V932.7H355.5V956.4H354.0V933.8H352.5V945.9H351.0V943.5H349.5V940.3H348.0V944.9H346.5V945.3H345.0V949.7H343.5V947.3H342.0V947.5H340.5V919.8H339.0V930.3H337.5V934.7H336.0V930.1H334.5V929.8H333.0Z"/>
<path d="M468.0 668.4H469.5V659.5H471.0V661.0H472.5V659.4H474.0V659.3H475.5V659.4H477.0V662.2H478.5V659.6H480.0V662.6H481.5V663.2H483.0V661.4H484.5V659.3H486.0V659.3H487.5V659.7H489.0V660.1H490.5V666.4H492.0V663.2H493.5V660.5H495.0V659.4H496.5V678.7H498.0V710.8H499.5V709.5H501.0V691.8H502.5V691.5H504.0V692.3H505.5V704.6H507.0V708.8H508.5V687.5H510.0V700.0H511.5V684.8H513.0V699.6H514.5V684.8H516.0V699.8H517.5V687.1H519.0V702.7H520.5V685.9H522.0V697.6H523.5V689.0H525.0V677.0H526.5V692.8H528.0V675.9H529.5V666.3H531.0V663.6H532.5V672.3H534.0V663.8H535.5V659.3H537.0V687.3H538.5V661.3H540.0V666.0H541.5V659.3H543.0V662.4H544.5V659.4H546.0V660.2H547.5V659.4H549.0V661.5H550.5V672.3H552.0V659.3H553.5V660.1H555.0V665.3H556.5V659.6H558.0V659.3H559.5V661.7H561.0V659.8H562.5V660.1H564.0V659.3H565.5V659.3H567.0V659.3H568.5V659.6H570.0V664.3H571.5V661.1H573.0V659.3H574.5V659.3H576.0V659.3H577.5V659.3H579.0V664.0H580.5V659.8H582.0V659.3H583.5V659.3H585.0V660.1H586.5V664.3H588.0V660.1H589.5V659.5H591.0V692.3H592.5V665.2H594.0V660.6H595.5V659.3H597.0V659.3H598.5V666.9H600.0V674.3H601.5V674.3H603.0V659.8H604.5V663.7H606.0V661.7H607.5V659.3H609.0V663.2H610.5V659.3H612.0V660.5H613.5V669.1H615.0V663.7H616.5V660.6H618.0V659.4H619.5V660.5H621.0V688.2H622.5V718.4H623.0V749.9H622.5V789.7H621.0V801.0H619.5V801.9H618.0V798.5H616.5V801.8H615.0V804.8H613.5V804.8H612.0V800.5H610.5V804.4H609.0V802.8H607.5V800.8H606.0V797.7H604.5V804.8H603.0V789.8H601.5V789.8H600.0V804.7H598.5V796.2H597.0V804.7H595.5V804.8H594.0V804.8H592.5V771.8H591.0V804.8H589.5V804.8H588.0V800.6H586.5V804.8H585.0V804.8H583.5V804.6H582.0V803.6H580.5V804.8H579.0V804.8H577.5V804.4H576.0V804.5H574.5V804.1H573.0V797.8H571.5V803.8H570.0V800.2H568.5V804.8H567.0V801.6H565.5V804.8H564.0V804.8H562.5V801.4H561.0V804.2H559.5V804.7H558.0V803.2H556.5V804.8H555.0V803.2H553.5V804.8H552.0V791.8H550.5V800.1H549.0V804.8H547.5V804.8H546.0V804.5H544.5V804.7H543.0V804.1H541.5V804.7H540.0V799.8H538.5V776.8H537.0V799.2H535.5V800.0H534.0V787.5H532.5V787.3H531.0V775.9H529.5V772.4H528.0V795.9H526.5V788.3H525.0V764.8H523.5V766.5H522.0V784.7H520.5V782.0H519.0V778.1H517.5V777.3H516.0V755.2H514.5V776.9H513.0V763.8H511.5V761.0H510.0V767.7H508.5V754.2H507.0V754.2H505.5V774.3H504.0V772.1H502.5V778.2H501.0V771.7H499.5V764.9H498.0V775.7H496.5V802.5H495.0V804.8H493.5V803.1H492.0V804.1H490.5V804.3H489.0V804.8H487.5V800.3H486.0V804.2H484.5V804.8H483.0V800.0H481.5V804.6H480.0V804.1H478.5V802.5H477.0V804.0H475.5V804.8H474.0V802.5H472.5V804.8H471.0V804.7H469.5V803.8H468.0Z"/>
<path d="M468.0 818.5H469.5V817.7H471.0V814.5H472.5V812.3H474.0V813.7H475.5V816.1H477.0V814.7H478.5V816.0H480.0V812.6H481.5V812.4H483.0V813.2H484.5V812.5H486.0V812.4H487.5V814.5H489.0V814.6H490.5V812.3H492.0V817.3H493.5V812.3H495.0V815.7H496.5V829.2H498.0V841.8H499.5V848.7H501.0V841.9H502.5V860.3H504.0V860.3H505.5V838.5H507.0V855.0H508.5V838.1H510.0V845.8H511.5V859.8H513.0V837.8H514.5V861.4H516.0V841.3H517.5V843.3H519.0V848.9H520.5V841.4H522.0V828.2H523.5V835.7H525.0V823.1H526.5V842.2H528.0V843.8H529.5V818.2H531.0V818.7H532.5V817.1H534.0V816.7H535.5V813.4H537.0V840.3H538.5V813.1H540.0V812.3H541.5V815.5H543.0V812.3H544.5V812.3H546.0V819.1H547.5V812.3H549.0V812.3H550.5V825.3H552.0V812.3H553.5V812.3H555.0V814.8H556.5V812.3H558.0V821.5H559.5V812.3H561.0V820.4H562.5V812.3H564.0V815.4H565.5V812.6H567.0V813.3H568.5V812.3H570.0V814.0H571.5V812.3H573.0V812.3H574.5V812.4H576.0V812.3H577.5V815.7H579.0V812.3H580.5V821.3H582.0V815.1H583.5V817.7H585.0V812.3H586.5V814.2H588.0V816.3H589.5V819.0H591.0V845.3H592.5V813.9H594.0V817.3H595.5V821.3H597.0V812.3H598.5V812.3H600.0V827.3H601.5V827.3H603.0V812.3H604.5V812.3H606.0V812.3H607.5V813.5H609.0V812.3H610.5V812.8H612.0V821.1H613.5V813.1H615.0V815.5H616.5V812.5H618.0V820.3H619.5V812.3H621.0V827.5H622.5V868.9H623.0V900.5H622.5V925.6H621.0V957.5H619.5V956.0H618.0V957.8H616.5V957.1H615.0V956.6H613.5V957.8H612.0V957.8H610.5V957.5H609.0V953.5H607.5V957.8H606.0V957.6H604.5V957.7H603.0V942.8H601.5V942.8H600.0V957.8H598.5V956.1H597.0V957.8H595.5V955.3H594.0V957.5H592.5V924.8H591.0V953.8H589.5V957.8H588.0V957.7H586.5V957.8H585.0V957.8H583.5V956.3H582.0V957.8H580.5V951.2H579.0V957.7H577.5V957.7H576.0V952.3H574.5V950.4H573.0V957.8H571.5V957.8H570.0V957.8H568.5V957.6H567.0V955.6H565.5V953.6H564.0V957.8H562.5V957.8H561.0V957.8H559.5V957.2H558.0V957.3H556.5V957.7H555.0V955.5H553.5V952.5H552.0V944.8H550.5V955.7H549.0V948.6H547.5V957.7H546.0V951.3H544.5V955.3H543.0V957.6H541.5V957.6H540.0V953.8H538.5V929.8H537.0V957.4H535.5V941.8H534.0V935.4H532.5V929.3H531.0V940.7H529.5V926.7H528.0V922.0H526.5V944.0H525.0V922.3H523.5V920.6H522.0V924.8H520.5V931.1H519.0V929.4H517.5V910.8H516.0V930.1H514.5V913.1H513.0V932.0H511.5V913.8H510.0V907.0H508.5V917.9H507.0V916.8H505.5V931.4H504.0V931.3H502.5V922.6H501.0V928.2H499.5V925.6H498.0V934.0H496.5V955.4H495.0V952.9H493.5V957.8H492.0V954.7H490.5V957.8H489.0V951.4H487.5V954.4H486.0V950.4H484.5V955.6H483.0V957.7H481.5V956.0H480.0V950.7H478.5V956.6H477.0V953.4H475.5V957.0H474.0V957.4H472.5V955.3H471.0V957.6H469.5V956.1H468.0Z"/>
<path d="M625.5 684.1H627.0V682.8H628.5V681.5H630.0V678.4H631.5V687.7H633.0V669.0H634.5V667.3H636.0V670.7H637.5V661.5H639.0V671.9H640.5V665.0H642.0V678.4H643.5V663.3H645.0V690.0H646.5V699.0H648.0V674.0H649.5V673.1H651.0V668.4H652.5V674.0H654.0V672.9H655.5V684.9H657.0V699.3H658.5V674.5H660.0V693.6H661.5V677.0H663.0V672.2H664.5V666.5H666.0V674.7H667.5V675.3H669.0V666.5H670.5V679.7H672.0V686.0H673.5V685.5H675.0V677.2H676.5V671.9H678.0V686.0H679.5V679.5H681.0V678.2H682.5V659.7H684.0V659.3H685.5V679.3H687.0V659.4H688.5V659.8H690.0V659.5H691.5V664.3H693.0V659.8H694.5V659.4H696.0V659.3H697.5V659.4H699.0V659.3H700.5V659.7H702.0V659.8H703.5V663.6H705.0V659.4H706.5V659.7H708.0V660.2H709.5V661.2H711.0V671.9H712.5V659.3H714.0V669.3H715.5V666.6H717.0V660.7H718.5V662.0H720.0V682.9H721.5V695.6H723.0V694.5H724.5V712.5H726.0V727.3H727.5V728.1H728.0V733.7H727.5V740.9H726.0V758.5H724.5V763.9H723.0V780.1H721.5V792.3H720.0V795.4H718.5V787.0H717.0V802.6H715.5V803.7H714.0V802.0H712.5V781.8H711.0V788.6H709.5V781.0H708.0V793.9H706.5V795.7H705.0V796.2H703.5V804.6H702.0V804.3H700.5V804.8H699.0V804.4H697.5V804.4H696.0V804.4H694.5V804.7H693.0V799.8H691.5V804.4H690.0V804.8H688.5V804.4H687.0V784.8H685.5V804.8H684.0V804.3H682.5V792.8H681.0V777.9H679.5V790.6H678.0V792.5H676.5V778.2H675.0V777.2H673.5V788.4H672.0V795.8H670.5V790.5H669.0V791.6H667.5V798.6H666.0V791.8H664.5V794.8H663.0V764.9H661.5V764.9H660.0V795.6H658.5V782.1H657.0V767.1H655.5V787.9H654.0V764.8H652.5V770.7H651.0V764.8H649.5V774.5H648.0V777.0H646.5V799.8H645.0V795.6H643.5V780.1H642.0V795.2H640.5V794.5H639.0V781.3H637.5V802.2H636.0V799.8H634.5V774.8H633.0V786.0H631.5V793.9H630.0V782.6H628.5V794.7H627.0V783.8H625.5Z"/>
<path d="M625.5 822.3H627.0V829.2H628.5V837.8H630.0V834.6H631.5V828.7H633.0V822.1H634.5V819.5H636.0V814.0H637.5V831.2H639.0V820.4H640.5V824.3H642.0V814.9H643.5V821.1H645.0V844.4H646.5V850.1H648.0V846.4H649.5V849.7H651.0V851.8H652.5V821.3H654.0V837.0H655.5V834.0H657.0V843.1H658.5V822.7H660.0V849.2H661.5V846.4H663.0V838.0H664.5V818.3H666.0V823.3H667.5V820.7H669.0V819.1H670.5V827.9H672.0V825.7H673.5V834.6H675.0V842.3H676.5V824.3H678.0V828.9H679.5V841.6H681.0V839.2H682.5V812.6H684.0V812.8H685.5V832.3H687.0V812.4H688.5V812.6H690.0V812.8H691.5V817.3H693.0V812.4H694.5V812.5H696.0V812.6H697.5V812.4H699.0V812.7H700.5V812.7H702.0V812.7H703.5V813.0H705.0V816.5H706.5V825.7H708.0V826.6H709.5V835.6H711.0V814.3H712.5V819.2H714.0V836.2H715.5V822.0H717.0V812.8H718.5V823.7H720.0V840.7H721.5V852.3H723.0V864.2H724.5V858.2H726.0V873.8H727.5V882.5H728.0V891.8H727.5V899.2H726.0V911.5H724.5V905.3H723.0V920.1H721.5V929.4H720.0V947.2H718.5V957.8H717.0V953.5H715.5V953.5H714.0V953.3H712.5V936.1H711.0V948.8H709.5V933.9H708.0V934.4H706.5V933.8H705.0V952.8H703.5V957.5H702.0V957.7H700.5V957.8H699.0V957.5H697.5V957.4H696.0V957.7H694.5V957.4H693.0V952.8H691.5V957.5H690.0V957.7H688.5V957.5H687.0V937.8H685.5V957.6H684.0V957.7H682.5V929.0H681.0V927.9H679.5V941.6H678.0V927.8H676.5V928.9H675.0V929.7H673.5V940.7H672.0V938.6H670.5V947.4H669.0V951.8H667.5V951.6H666.0V944.3H664.5V932.8H663.0V944.5H661.5V929.6H660.0V948.0H658.5V944.3H657.0V947.9H655.5V926.7H654.0V945.4H652.5V945.0H651.0V948.7H649.5V919.6H648.0V933.8H646.5V946.1H645.0V935.1H643.5V939.0H642.0V954.7H640.5V943.1H639.0V938.1H637.5V956.8H636.0V948.4H634.5V942.7H633.0V945.8H631.5V927.9H630.0V937.1H628.5V928.2H627.0V944.3H625.5Z"/>
<path d="M730.5 704.1H732.0V706.0H733.5V701.8H735.0V701.7H736.5V698.5H738.0V708.3H739.5V696.6H741.0V694.4H742.5V695.0H744.0V702.9H745.5V708.6H747.0V702.3H748.5V693.3H750.0V695.5H751.5V693.3H753.0V696.5H754.5V696.7H756.0V708.9H757.5V700.3H759.0V707.9H760.5V707.7H762.0V692.4H763.5V692.4H765.0V709.2H766.5V690.9H768.0V695.6H769.5V702.0H771.0V685.5H772.5V696.2H774.0V695.5H775.5V692.5H777.0V676.1H778.5V672.9H780.0V672.2H781.5V664.5H783.0V660.8H784.5V661.4H786.0V660.7H787.5V670.7H789.0V662.8H790.5V659.5H792.0V662.3H793.5V660.1H795.0V659.4H796.5V667.7H798.0V661.4H799.5V661.8H801.0V660.8H802.5V667.8H804.0V672.0H805.5V675.7H807.0V675.2H808.5V661.4H810.0V668.1H811.5V669.1H813.0V669.0H814.5V688.3H816.0V710.1H817.5V678.8H819.0V689.4H820.5V704.4H822.0V668.0H823.5V665.3H825.0V697.8H826.5V698.0H828.0V688.3H829.5V695.9H831.0V698.3H832.5V692.8H834.0V699.2H835.5V696.7H837.0V699.3H838.5V696.8H840.0V663.4H841.5V679.6H843.0V663.8H844.5V693.0H846.0V663.5H847.5V693.4H849.0V694.7H850.5V663.5H852.0V663.8H853.5V682.3H855.0V699.2H856.5V699.3H858.0V694.8H859.5V696.1H861.0V671.8H862.5V679.9H864.0V662.9H865.5V661.9H867.0V663.8H868.5V659.3H870.0V665.6H871.5V679.0H873.0V665.1H874.5V692.0H876.0V699.3H877.5V666.9H879.0V667.9H880.5V690.5H882.0V664.4H883.5V661.9H885.0V663.2H886.5V660.8H888.0V665.8H889.5V661.8H891.0V696.6H892.5V672.1H894.0V684.3H895.5V688.5H897.0V693.8H898.5V684.3H900.0V680.4H901.5V702.6H903.0V678.3H904.5V703.3H906.0V662.4H907.5V664.9H909.0V670.1H910.5V663.0H912.0V674.4H913.5V661.4H915.0V673.9H916.5V661.6H918.0V672.2H919.5V703.7H921.0V714.7H922.5V731.3H923.0V738.6H922.5V750.2H921.0V758.8H919.5V799.4H918.0V794.0H916.5V793.8H915.0V794.2H913.5V789.5H912.0V804.3H910.5V788.3H909.0V797.3H907.5V799.7H906.0V785.8H904.5V774.7H903.0V783.0H901.5V785.8H900.0V773.3H898.5V771.0H897.0V785.8H895.5V765.0H894.0V788.2H892.5V764.5H891.0V801.0H889.5V804.6H888.0V802.4H886.5V804.4H885.0V796.8H883.5V796.8H882.0V781.7H880.5V801.5H879.0V798.4H877.5V789.5H876.0V795.3H874.5V791.5H873.0V768.4H871.5V791.4H870.0V802.8H868.5V803.1H867.0V804.8H865.5V803.3H864.0V786.3H862.5V779.4H861.0V800.7H859.5V774.9H858.0V770.8H856.5V798.2H855.0V799.0H853.5V789.7H852.0V796.5H850.5V783.5H849.0V799.2H847.5V794.8H846.0V783.9H844.5V799.2H843.0V779.1H841.5V780.0H840.0V798.0H838.5V777.6H837.0V782.7H835.5V765.9H834.0V800.7H832.5V765.5H831.0V786.4H829.5V765.5H828.0V769.0H826.5V797.1H825.0V771.6H823.5V782.8H822.0V770.8H820.5V755.9H819.0V753.8H817.5V796.1H816.0V786.5H814.5V769.4H813.0V785.5H811.5V800.6H810.0V792.8H808.5V788.4H807.0V798.1H805.5V787.4H804.0V788.1H802.5V795.7H801.0V802.0H799.5V801.5H798.0V804.1H796.5V804.7H795.0V790.9H793.5V804.6H792.0V803.8H790.5V793.4H789.0V798.9H787.5V802.3H786.0V804.7H784.5V792.8H783.0V784.5H781.5V796.2H780.0V794.0H778.5V789.5H777.0V786.0H775.5V783.6H774.0V773.0H772.5V781.1H771.0V769.9H769.5V767.7H768.0V781.4H766.5V781.6H765.0V770.3H763.5V780.5H762.0V765.9H760.5V768.0H759.0V765.5H757.5V773.7H756.0V776.9H754.5V763.1H753.0V769.9H751.5V772.0H750.0V769.6H748.5V759.3H747.0V772.9H745.5V759.3H744.0V769.9H742.5V762.7H741.0V763.0H739.5V767.6H738.0V761.3H736.5V766.3H735.0V764.4H733.5V764.8H732.0V765.1H730.5Z"/>
<path d="M730.5 851.4H732.0V842.5H733.5V842.2H735.0V848.6H736.5V845.2H738.0V859.7H739.5V839.3H741.0V836.5H742.5V858.6H744.0V857.9H745.5V836.2H747.0V857.8H748.5V833.3H750.0V848.7H751.5V854.6H753.0V852.6H754.5V838.8H756.0V838.5H757.5V835.0H759.0V851.0H760.5V848.3H762.0V845.8H763.5V848.1H765.0V821.7H766.5V829.3H768.0V824.5H769.5V825.4H771.0V821.0H772.5V821.8H774.0V838.3H775.5V817.2H777.0V815.5H778.5V834.4H780.0V823.4H781.5V815.0H783.0V815.1H784.5V828.0H786.0V817.2H787.5V821.1H789.0V813.1H790.5V822.4H792.0V820.7H793.5V812.5H795.0V814.6H796.5V830.0H798.0V813.2H799.5V826.5H801.0V826.7H802.5V813.5H804.0V814.3H805.5V825.9H807.0V821.1H808.5V816.9H810.0V829.1H811.5V822.3H813.0V846.9H814.5V824.6H816.0V850.5H817.5V849.7H819.0V862.3H820.5V820.4H822.0V825.3H823.5V842.8H825.0V833.7H826.5V845.8H828.0V817.4H829.5V816.9H831.0V850.7H832.5V835.9H834.0V839.3H835.5V817.1H837.0V819.1H838.5V842.9H840.0V823.2H841.5V848.4H843.0V832.9H844.5V843.8H846.0V849.8H847.5V823.8H849.0V816.8H850.5V832.9H852.0V816.5H853.5V829.6H855.0V852.2H856.5V822.7H858.0V851.9H859.5V836.6H861.0V850.9H862.5V834.4H864.0V813.0H865.5V815.5H867.0V813.8H868.5V814.0H870.0V813.3H871.5V825.0H873.0V845.2H874.5V852.3H876.0V815.3H877.5V852.1H879.0V817.4H880.5V846.1H882.0V815.5H883.5V813.3H885.0V812.9H886.5V814.8H888.0V820.3H889.5V832.6H891.0V844.6H892.5V852.9H894.0V850.4H895.5V834.9H897.0V832.8H898.5V835.2H900.0V850.5H901.5V831.5H903.0V842.7H904.5V855.8H906.0V827.0H907.5V812.3H909.0V812.4H910.5V827.7H912.0V812.4H913.5V813.2H915.0V830.0H916.5V827.3H918.0V835.4H919.5V847.8H921.0V875.8H922.5V883.3H923.0V886.8H922.5V900.1H921.0V918.3H919.5V934.6H918.0V954.8H916.5V957.0H915.0V942.4H913.5V941.5H912.0V941.0H910.5V941.3H909.0V956.0H907.5V957.1H906.0V926.4H904.5V937.6H903.0V930.3H901.5V923.7H900.0V935.3H898.5V917.4H897.0V938.4H895.5V916.8H894.0V946.6H892.5V937.5H891.0V937.7H889.5V957.6H888.0V957.6H886.5V955.2H885.0V953.6H883.5V957.7H882.0V955.7H880.5V940.8H879.0V946.9H877.5V930.6H876.0V949.4H874.5V950.5H873.0V955.7H871.5V940.8H870.0V957.6H868.5V953.5H867.0V954.8H865.5V952.8H864.0V954.2H862.5V953.0H861.0V922.3H859.5V920.1H858.0V951.9H856.5V929.1H855.0V935.6H853.5V922.6H852.0V934.2H850.5V953.6H849.0V952.9H847.5V932.7H846.0V932.9H844.5V930.2H843.0V935.9H841.5V922.8H840.0V930.9H838.5V919.7H837.0V943.6H835.5V926.8H834.0V920.9H832.5V930.9H831.0V919.3H829.5V949.1H828.0V923.6H826.5V948.8H825.0V950.4H823.5V908.7H822.0V907.9H820.5V937.7H819.0V940.6H817.5V949.8H816.0V906.3H814.5V912.9H813.0V953.8H811.5V955.4H810.0V957.7H808.5V940.7H807.0V945.1H805.5V943.7H804.0V943.4H802.5V952.7H801.0V948.4H799.5V956.1H798.0V948.0H796.5V951.6H795.0V957.0H793.5V952.6H792.0V949.3H790.5V956.5H789.0V946.8H787.5V957.2H786.0V944.7H784.5V955.3H783.0V939.9H781.5V941.7H780.0V940.4H778.5V945.8H777.0V937.4H775.5V935.4H774.0V928.1H772.5V925.6H771.0V921.4H769.5V944.3H768.0V933.8H766.5V941.1H765.0V922.0H763.5V947.6H762.0V921.2H760.5V939.6H759.0V939.8H757.5V939.4H756.0V945.0H754.5V918.3H753.0V918.3H751.5V942.6H750.0V927.1H748.5V915.6H747.0V917.1H745.5V939.1H744.0V933.1H742.5V925.8H741.0V935.3H739.5V913.6H738.0V914.2H736.5V915.5H735.0V915.2H733.5V912.1H732.0V922.3H730.5Z"/>
<path d="M925.0 688.5H926.5V684.4H928.0V677.9H929.5V672.0H931.0V676.3H932.5V671.4H934.0V661.1H935.5V659.3H937.0V669.8H938.5V659.6H940.0V659.4H941.5V661.0H943.0V659.5H944.5V661.2H946.0V662.1H947.5V676.2H949.0V661.3H950.5V665.1H952.0V659.4H953.5V660.1H955.0V660.7H956.5V675.9H958.0V659.6H959.5V659.6H961.0V660.7H962.5V662.8H964.0V663.8H965.5V659.5H967.0V666.0H968.5V660.6H970.0V664.3H971.5V661.4H973.0V660.1H974.5V659.5H976.0V659.4H977.5V667.2H979.0V660.1H980.5V683.5H982.0V668.8H983.5V689.7H985.0V687.6H986.5V665.4H988.0V688.7H989.5V676.4H991.0V691.1H992.5V687.3H994.0V667.8H995.5V690.6H997.0V690.3H998.5V688.6H1000.0V668.5H1001.5V665.7H1003.0V685.6H1004.5V681.3H1006.0V693.3H1007.5V668.7H1009.0V659.8H1010.5V659.6H1012.0V659.8H1013.5V659.6H1015.0V659.3H1016.5V659.4H1018.0V659.7H1019.5V659.8H1021.0V659.8H1022.5V659.3H1024.0V659.7H1025.5V659.5H1027.0V659.6H1028.5V659.3H1030.0V659.7H1031.5V674.3H1033.0V659.8H1034.5V659.3H1036.0V659.6H1037.5V659.4H1039.0V659.4H1040.5V659.7H1042.0V659.3H1043.5V659.6H1045.0V676.0H1046.5V705.9H1048.0V754.3H1046.5V787.6H1045.0V804.8H1043.5V804.5H1042.0V804.4H1040.5V804.4H1039.0V804.6H1037.5V804.7H1036.0V804.4H1034.5V804.4H1033.0V789.8H1031.5V804.3H1030.0V804.6H1028.5V804.6H1027.0V804.8H1025.5V804.7H1024.0V804.8H1022.5V804.6H1021.0V804.8H1019.5V804.5H1018.0V804.3H1016.5V804.5H1015.0V804.4H1013.5V804.8H1012.0V804.4H1010.5V804.8H1009.0V794.6H1007.5V770.8H1006.0V793.7H1004.5V786.5H1003.0V798.4H1001.5V789.4H1000.0V773.3H998.5V793.7H997.0V779.2H995.5V794.8H994.0V787.2H992.5V781.6H991.0V798.0H989.5V788.5H988.0V780.5H986.5V775.6H985.0V775.3H983.5V772.8H982.0V792.4H980.5V801.2H979.0V794.5H977.5V801.5H976.0V801.2H974.5V787.7H973.0V801.5H971.5V792.1H970.0V800.2H968.5V788.1H967.0V788.4H965.5V804.2H964.0V804.8H962.5V793.3H961.0V797.7H959.5V802.0H958.0V792.1H956.5V802.7H955.0V802.4H953.5V794.7H952.0V801.9H950.5V799.9H949.0V791.4H947.5V790.1H946.0V804.7H944.5V804.8H943.0V801.9H941.5V802.8H940.0V804.7H938.5V788.1H937.0V790.9H935.5V804.8H934.0V794.9H932.5V794.8H931.0V787.2H929.5V784.1H928.0V772.7H926.5V769.6H925.0Z"/>
<path d="M925.0 851.2H926.5V836.9H928.0V831.0H929.5V832.8H931.0V824.7H932.5V817.7H934.0V814.0H935.5V824.7H937.0V813.3H938.5V818.7H940.0V812.3H941.5V828.9H943.0V812.6H944.5V812.5H946.0V819.8H947.5V818.8H949.0V819.5H950.5V812.3H952.0V814.4H953.5V813.0H955.0V812.8H956.5V813.2H958.0V815.0H959.5V814.9H961.0V824.8H962.5V815.8H964.0V815.6H965.5V812.3H967.0V819.0H968.5V812.3H970.0V814.4H971.5V815.0H973.0V817.3H974.5V819.0H976.0V815.5H977.5V813.1H979.0V812.3H980.5V820.3H982.0V822.2H983.5V826.9H985.0V844.3H986.5V823.2H988.0V821.1H989.5V843.7H991.0V830.9H992.5V834.2H994.0V835.5H995.5V833.0H997.0V836.1H998.5V818.7H1000.0V837.1H1001.5V843.7H1003.0V818.9H1004.5V839.7H1006.0V846.3H1007.5V822.1H1009.0V812.4H1010.5V812.6H1012.0V812.7H1013.5V812.7H1015.0V812.8H1016.5V812.7H1018.0V812.3H1019.5V812.4H1021.0V812.8H1022.5V812.7H1024.0V812.6H1025.5V812.8H1027.0V812.6H1028.5V812.6H1030.0V812.8H1031.5V827.3H1033.0V812.7H1034.5V812.3H1036.0V812.4H1037.5V812.6H1039.0V812.8H1040.5V812.7H1042.0V812.3H1043.5V812.5H1045.0V840.9H1046.5V870.8H1048.0V901.3H1046.5V938.4H1045.0V957.5H1043.5V957.8H1042.0V957.4H1040.5V957.7H1039.0V957.8H1037.5V957.4H1036.0V957.8H1034.5V957.8H1033.0V942.8H1031.5V957.3H1030.0V957.4H1028.5V957.4H1027.0V957.4H1025.5V957.7H1024.0V957.6H1022.5V957.7H1021.0V957.6H1019.5V957.7H1018.0V957.6H1016.5V957.3H1015.0V957.5H1013.5V957.3H1012.0V957.6H1010.5V957.4H1009.0V943.1H1007.5V923.8H1006.0V951.7H1004.5V935.9H1003.0V950.9H1001.5V950.0H1000.0V935.8H998.5V927.6H997.0V930.1H995.5V940.0H994.0V943.1H992.5V926.5H991.0V928.3H989.5V948.5H988.0V948.5H986.5V934.4H985.0V925.8H983.5V949.5H982.0V951.8H980.5V957.8H979.0V944.0H977.5V956.8H976.0V942.0H974.5V947.6H973.0V956.7H971.5V941.0H970.0V956.5H968.5V954.2H967.0V957.8H965.5V956.6H964.0V957.8H962.5V957.3H961.0V945.4H959.5V949.5H958.0V957.1H956.5V957.5H955.0V942.7H953.5V948.4H952.0V957.2H950.5V957.8H949.0V949.1H947.5V951.7H946.0V956.1H944.5V956.5H943.0V955.6H941.5V955.5H940.0V956.5H938.5V957.8H937.0V942.9H935.5V947.2H934.0V943.7H932.5V950.6H931.0V935.5H929.5V939.4H928.0V929.1H926.5V923.6H925.0Z"/>
<path d="M1050.5 661.0H1052.0V669.8H1053.5V659.5H1055.0V660.0H1056.5V659.5H1058.0V659.4H1059.5V670.9H1061.0V659.3H1062.5V661.9H1064.0V660.1H1065.5V671.3H1067.0V659.3H1068.5V659.3H1070.0V660.6H1071.5V659.3H1073.0V660.2H1074.5V665.8H1076.0V659.3H1077.5V662.1H1079.0V663.7H1080.5V670.6H1082.0V694.9H1083.5V672.2H1085.0V699.4H1086.5V674.4H1088.0V699.3H1089.5V698.8H1091.0V676.0H1092.5V671.8H1094.0V671.7H1095.5V672.0H1097.0V690.6H1098.5V672.8H1100.0V668.9H1101.5V673.7H1103.0V659.6H1104.5V659.3H1106.0V659.3H1107.5V659.4H1109.0V659.8H1110.5V669.3H1112.0V659.7H1113.5V659.5H1115.0V659.3H1116.5V659.4H1118.0V659.7H1119.5V659.8H1121.0V659.7H1122.5V659.4H1124.0V659.3H1125.5V659.3H1127.0V659.5H1128.5V659.3H1130.0V709.2H1131.5V702.2H1133.0V708.7H1134.5V705.3H1136.0V677.2H1137.5V662.4H1139.0V671.5H1140.5V694.9H1142.0V699.3H1143.5V698.5H1145.0V703.8H1146.5V696.1H1148.0V702.6H1149.5V666.0H1151.0V659.7H1152.5V659.3H1154.0V659.3H1155.5V659.3H1157.0V668.6H1158.5V659.3H1160.0V659.3H1161.5V659.3H1163.0V659.3H1164.5V660.7H1166.0V659.5H1167.5V659.5H1169.0V659.3H1170.5V659.7H1172.0V669.6H1173.5V659.3H1175.0V659.4H1176.5V662.5H1178.0V659.3H1179.5V667.4H1181.0V659.7H1182.5V659.9H1184.0V659.3H1185.5V686.8H1187.0V701.8H1188.5V702.2H1190.0V710.1H1191.5V703.7H1193.0V700.4H1194.5V694.7H1196.0V699.1H1197.5V705.2H1199.0V709.1H1200.5V719.7H1202.0V727.0H1203.5V734.1H1202.0V751.2H1200.5V762.1H1199.0V759.2H1197.5V767.2H1196.0V770.2H1194.5V764.6H1193.0V758.5H1191.5V754.0H1190.0V766.0H1188.5V769.2H1187.0V786.9H1185.5V804.8H1184.0V804.8H1182.5V804.8H1181.0V801.4H1179.5V799.6H1178.0V804.1H1176.5V794.2H1175.0V804.7H1173.5V804.8H1172.0V804.7H1170.5V804.8H1169.0V804.7H1167.5V804.6H1166.0V804.7H1164.5V800.0H1163.0V804.6H1161.5V799.5H1160.0V803.2H1158.5V804.8H1157.0V793.0H1155.5V804.8H1154.0V802.2H1152.5V804.7H1151.0V802.3H1149.5V766.9H1148.0V774.3H1146.5V764.0H1145.0V763.8H1143.5V759.9H1142.0V768.5H1140.5V804.6H1139.0V800.6H1137.5V786.6H1136.0V769.7H1134.5V755.2H1133.0V757.8H1131.5V761.3H1130.0V804.4H1128.5V804.7H1127.0V804.5H1125.5V804.7H1124.0V804.8H1122.5V804.5H1121.0V804.8H1119.5V804.6H1118.0V804.5H1116.5V804.4H1115.0V804.6H1113.5V804.5H1112.0V794.8H1110.5V804.3H1109.0V804.3H1107.5V804.8H1106.0V804.6H1104.5V804.6H1103.0V796.2H1101.5V774.7H1100.0V795.0H1098.5V793.1H1097.0V791.3H1095.5V783.1H1094.0V785.2H1092.5V775.6H1091.0V790.5H1089.5V768.7H1088.0V787.6H1086.5V786.0H1085.0V784.3H1083.5V778.9H1082.0V793.6H1080.5V793.9H1079.0V804.1H1077.5V802.2H1076.0V804.6H1074.5V804.7H1073.0V802.9H1071.5V799.0H1070.0V804.4H1068.5V803.3H1067.0V803.5H1065.5V803.1H1064.0V791.9H1062.5V802.3H1061.0V802.5H1059.5V794.5H1058.0V804.8H1056.5V803.4H1055.0V804.0H1053.5V803.9H1052.0V801.4H1050.5Z"/>
<path d="M1050.5 817.2H1052.0V812.4H1053.5V816.0H1055.0V817.6H1056.5V813.8H1058.0V814.5H1059.5V817.6H1061.0V812.3H1062.5V827.2H1064.0V813.2H1065.5V815.9H1067.0V814.2H1068.5V812.4H1070.0V817.2H1071.5V812.3H1073.0V812.3H1074.5V820.1H1076.0V817.9H1077.5V812.4H1079.0V812.3H1080.5V823.9H1082.0V848.6H1083.5V826.1H1085.0V844.2H1086.5V838.4H1088.0V850.2H1089.5V850.6H1091.0V851.7H1092.5V848.0H1094.0V824.5H1095.5V848.0H1097.0V839.0H1098.5V833.6H1100.0V830.8H1101.5V825.6H1103.0V812.7H1104.5V812.4H1106.0V812.8H1107.5V812.4H1109.0V812.5H1110.5V822.3H1112.0V812.8H1113.5V812.4H1115.0V812.8H1116.5V812.4H1118.0V812.8H1119.5V812.8H1121.0V812.4H1122.5V812.4H1124.0V812.3H1125.5V812.3H1127.0V812.5H1128.5V812.4H1130.0V853.5H1131.5V849.7H1133.0V850.4H1134.5V848.8H1136.0V842.7H1137.5V827.1H1139.0V822.1H1140.5V855.7H1142.0V840.6H1143.5V849.8H1145.0V842.5H1146.5V840.4H1148.0V840.5H1149.5V823.5H1151.0V812.3H1152.5V812.5H1154.0V815.8H1155.5V812.6H1157.0V812.4H1158.5V812.3H1160.0V812.6H1161.5V812.3H1163.0V812.3H1164.5V812.3H1166.0V821.5H1167.5V812.3H1169.0V812.9H1170.5V812.3H1172.0V812.3H1173.5V812.4H1175.0V812.3H1176.5V812.6H1178.0V813.3H1179.5V812.3H1181.0V812.3H1182.5V812.3H1184.0V812.3H1185.5V830.7H1187.0V847.2H1188.5V854.3H1190.0V860.4H1191.5V858.2H1193.0V851.1H1194.5V848.5H1196.0V849.0H1197.5V855.1H1199.0V858.3H1200.5V864.9H1202.0V881.4H1203.5V888.6H1202.0V900.6H1200.5V904.6H1199.0V918.1H1197.5V915.8H1196.0V918.8H1194.5V918.6H1193.0V914.7H1191.5V908.2H1190.0V908.4H1188.5V924.0H1187.0V936.2H1185.5V957.6H1184.0V946.2H1182.5V957.6H1181.0V957.8H1179.5V957.7H1178.0V957.8H1176.5V955.9H1175.0V955.8H1173.5V956.8H1172.0V953.3H1170.5V954.9H1169.0V957.8H1167.5V957.8H1166.0V949.7H1164.5V956.3H1163.0V957.8H1161.5V957.6H1160.0V957.8H1158.5V951.8H1157.0V957.8H1155.5V957.8H1154.0V955.7H1152.5V957.8H1151.0V946.4H1149.5V929.0H1148.0V915.4H1146.5V918.7H1145.0V921.0H1143.5V920.1H1142.0V921.7H1140.5V942.8H1139.0V957.6H1137.5V934.8H1136.0V908.6H1134.5V919.2H1133.0V908.1H1131.5V920.6H1130.0V957.4H1128.5V957.6H1127.0V957.7H1125.5V957.5H1124.0V957.3H1122.5V957.7H1121.0V957.4H1119.5V957.8H1118.0V957.3H1116.5V957.6H1115.0V957.4H1113.5V957.8H1112.0V947.8H1110.5V957.7H1109.0V957.6H1107.5V957.4H1106.0V957.5H1104.5V957.4H1103.0V950.6H1101.5V927.8H1100.0V942.9H1098.5V946.3H1097.0V935.9H1095.5V941.4H1094.0V934.0H1092.5V921.7H1091.0V928.3H1089.5V938.1H1088.0V921.5H1086.5V939.1H1085.0V923.7H1083.5V944.1H1082.0V936.5H1080.5V952.6H1079.0V952.9H1077.5V945.1H1076.0V953.2H1074.5V955.1H1073.0V957.6H1071.5V956.2H1070.0V957.6H1068.5V957.8H1067.0V956.9H1065.5V957.6H1064.0V956.7H1062.5V957.7H1061.0V948.2H1059.5V950.1H1058.0V943.5H1056.5V952.2H1055.0V956.5H1053.5V955.2H1052.0V957.2H1050.5Z"/>
</g>
<rect x="11.6" y="648" width="1.6" height="312" fill="#c41c30"/>
<path d="M7.7 943.5 L20.4 955.3 V969 H7.7 Z" fill="#9a9a9a"/>
<text x="14.4" y="967" font-family="Liberation Sans, sans-serif" font-size="10.5" font-weight="bold" fill="#fff" text-anchor="middle">1</text>
<path d="M114.2 943.5 L126.9 955.3 V969 H114.2 Z" fill="#9a9a9a"/>
<text x="120.9" y="967" font-family="Liberation Sans, sans-serif" font-size="10.5" font-weight="bold" fill="#fff" text-anchor="middle">1</text>
<path d="M247.2 943.5 L259.9 955.3 V969 H247.2 Z" fill="#9a9a9a"/>
<text x="253.89999999999998" y="967" font-family="Liberation Sans, sans-serif" font-size="10.5" font-weight="bold" fill="#fff" text-anchor="middle">1</text>
<path d="M332.7 943.5 L345.4 955.3 V969 H332.7 Z" fill="#9a9a9a"/>
<text x="339.4" y="967" font-family="Liberation Sans, sans-serif" font-size="10.5" font-weight="bold" fill="#fff" text-anchor="middle">1</text>
<path d="M467.7 943.5 L480.4 955.3 V969 H467.7 Z" fill="#9a9a9a"/>
<text x="474.4" y="967" font-family="Liberation Sans, sans-serif" font-size="10.5" font-weight="bold" fill="#fff" text-anchor="middle">1</text>
<path d="M625.2 943.5 L637.9000000000001 955.3 V969 H625.2 Z" fill="#9a9a9a"/>
<text x="631.9000000000001" y="967" font-family="Liberation Sans, sans-serif" font-size="10.5" font-weight="bold" fill="#fff" text-anchor="middle">1</text>
<path d="M730.2 943.5 L742.9000000000001 955.3 V969 H730.2 Z" fill="#9a9a9a"/>
<text x="736.9000000000001" y="967" font-family="Liberation Sans, sans-serif" font-size="10.5" font-weight="bold" fill="#fff" text-anchor="middle">1</text>
<path d="M924.7 943.5 L937.4000000000001 955.3 V969 H924.7 Z" fill="#9a9a9a"/>
<text x="931.4000000000001" y="967" font-family="Liberation Sans, sans-serif" font-size="10.5" font-weight="bold" fill="#fff" text-anchor="middle">1</text>
<path d="M1050.2 943.5 L1062.9 955.3 V969 H1050.2 Z" fill="#9a9a9a"/>
<text x="1056.9" y="967" font-family="Liberation Sans, sans-serif" font-size="10.5" font-weight="bold" fill="#fff" text-anchor="middle">1</text>
</svg>
<div class="b" style="left:20px;top:1006.5px;width:630px;height:9.5px;background:#fff;border-radius:4.5px;"></div>
<div class="b" style="left:40.6px;top:1004.6px;width:13.2px;height:13.2px;border-radius:50%;background:radial-gradient(circle at 50% 35%,#5a94ea,#3a74d8 70%);"></div>
<div class="b" style="left:672.3px;top:984px;width:155.2px;height:55px;background:#fff;border-radius:6px;"></div>
<div class="t" style="top:988.76px;font-size:46px;line-height:46px;color:#505050;font-family:'Liberation Sans', sans-serif;left:549.80px;width:400px;text-align:center;transform:scaleX(0.945);transform-origin:center center;">00:09</div>
<div class="t" style="top:1056.96px;font-size:17.3px;line-height:17.3px;color:#484848;font-family:'Liberation Sans', sans-serif;left:20.00px;">Registered to Pieter Stenekes - Sonoris Audio Engineering</div>
<div class="b" style="left:1302.8px;top:94.6px;width:157.7px;height:31.4px;background:#fff;border-radius:5px;"></div>
<div class="t" style="top:101.59px;font-size:18.2px;line-height:18.2px;color:#404040;font-family:'Liberation Sans', sans-serif;right:204.70px;">Title</div>
<div class="t" style="top:104.03px;font-size:15.2px;line-height:15.2px;color:#4a4a4a;font-family:'DejaVu Sans', 'Liberation Sans', sans-serif;left:1309.00px;">Fire Burning</div>
<div class="b" style="left:1302.8px;top:134.2px;width:157.7px;height:31.4px;background:#fff;border-radius:5px;"></div>
<div class="t" style="top:141.19px;font-size:18.2px;line-height:18.2px;color:#404040;font-family:'Liberation Sans', sans-serif;right:204.70px;">Performer</div>
<div class="t" style="top:143.63px;font-size:15.2px;line-height:15.2px;color:#4a4a4a;font-family:'DejaVu Sans', 'Liberation Sans', sans-serif;left:1309.00px;">Hot Shots</div>
<div class="b" style="left:1302.8px;top:173.8px;width:157.7px;height:31.4px;background:#fff;border-radius:5px;"></div>
<div class="t" style="top:180.79px;font-size:18.2px;line-height:18.2px;color:#404040;font-family:'Liberation Sans', sans-serif;right:204.70px;transform:scaleX(0.865);transform-origin:right center;">MCN</div>
<div class="t" style="top:183.23px;font-size:15.2px;line-height:15.2px;color:#4a4a4a;font-family:'DejaVu Sans', 'Liberation Sans', sans-serif;left:1309.00px;">0813285908925</div>
<div class="t" style="top:220.59px;font-size:18.2px;line-height:18.2px;color:#404040;font-family:'Liberation Sans', sans-serif;right:204.70px;">Edit</div>
<div class="b" style="left:1302.8px;top:213.6px;width:74.7px;height:30.6px;background:linear-gradient(#62a0f8,#3b82f5 60%,#2f76ef);border-radius:5px;"></div>
<div class="t" style="top:221.30px;font-size:17.6px;line-height:17.6px;color:#fff;font-family:'Liberation Sans', sans-serif;left:1140.15px;width:400px;text-align:center;transform:scaleX(0.87);transform-origin:center center;-webkit-text-stroke:0.25px #fff;">CD Text</div>
<div class="b" style="left:1385.6px;top:213.6px;width:74.9px;height:30.6px;background:linear-gradient(#62a0f8,#3b82f5 60%,#2f76ef);border-radius:5px;"></div>
<div class="t" style="top:221.30px;font-size:17.6px;line-height:17.6px;color:#fff;font-family:'Liberation Sans', sans-serif;left:1223.05px;width:400px;text-align:center;transform:scaleX(0.985);transform-origin:center center;-webkit-text-stroke:0.25px #fff;">Project</div>
<div class="t" style="top:260.50px;font-size:17.6px;line-height:17.6px;color:#404040;font-family:'Liberation Sans', sans-serif;left:1264.50px;">Total Length</div>
<div class="t" style="top:261.26px;font-size:16.7px;line-height:16.7px;color:#404040;font-family:'Liberation Sans', sans-serif;left:1374.50px;">51:56:67</div>
<svg width="1500" height="1081" viewBox="0 0 1500 1081">
<defs>
<linearGradient id="gL" gradientUnits="userSpaceOnUse" x1="0" y1="428.6" x2="0" y2="943">
<stop offset="0" stop-color="#861818"/><stop offset="0.03" stop-color="#861a18"/><stop offset="0.085" stop-color="#8a4c1c"/><stop offset="0.087" stop-color="#dc9a2c"/>
<stop offset="0.115" stop-color="#e0c02a"/><stop offset="0.135" stop-color="#d8d428"/><stop offset="0.215" stop-color="#d6d62a"/><stop offset="0.24" stop-color="#b0d62c"/><stop offset="0.273" stop-color="#70d42e"/><stop offset="0.30" stop-color="#44d430"/><stop offset="0.33" stop-color="#2cd230"/><stop offset="1" stop-color="#2cd230"/>
</linearGradient>
<linearGradient id="gR" gradientUnits="userSpaceOnUse" x1="0" y1="428.6" x2="0" y2="943">
<stop offset="0" stop-color="#861818"/><stop offset="0.03" stop-color="#861a18"/><stop offset="0.062" stop-color="#8a3a1a"/><stop offset="0.064" stop-color="#e07a2e"/>
<stop offset="0.095" stop-color="#e0a02c"/><stop offset="0.125" stop-color="#dcc42a"/><stop offset="0.145" stop-color="#d8d428"/><stop offset="0.215" stop-color="#d6d62a"/><stop offset="0.24" stop-color="#b0d62c"/><stop offset="0.273" stop-color="#70d42e"/><stop offset="0.30" stop-color="#44d430"/><stop offset="0.33" stop-color="#2cd230"/><stop offset="1" stop-color="#2cd230"/>
</linearGradient>
<linearGradient id="gM" gradientUnits="userSpaceOnUse" x1="0" y1="428.6" x2="0" y2="943">
<stop offset="0" stop-color="#861818"/><stop offset="0.171" stop-color="#861818"/><stop offset="0.175" stop-color="#de2c2c"/><stop offset="0.195" stop-color="#e0302c"/>
<stop offset="0.215" stop-color="#e07a2c"/><stop offset="0.244" stop-color="#e0cc2a"/><stop offset="0.255" stop-color="#dcd62a"/><stop offset="0.30" stop-color="#d4d82c"/><stop offset="0.324" stop-color="#90d42e"/><stop offset="0.353" stop-color="#2cd230"/><stop offset="1" stop-color="#2cd230"/>
</linearGradient>
</defs>
<rect x="1311" y="395.8" width="7.4" height="26.4" fill="#861818"/>
<rect x="1325.2" y="395.8" width="7.6" height="26.4" fill="#861818"/>
<rect x="1311" y="428.6" width="7.4" height="514.4" fill="url(#gL)"/>
<rect x="1325.2" y="428.6" width="7.6" height="514.4" fill="url(#gR)"/>
<rect x="1386" y="428.6" width="7.3" height="514.4" fill="url(#gM)"/>
<g fill="#555" stroke="#555" stroke-width="1.2" stroke-linejoin="round">
<path d="M1259.2 333.7 L1274.6 326.4 V341 Z M1273.4 333.7 L1287.6 326.4 V341 Z"/>
<path d="M1349.4 326.4 L1363.4 333.7 L1349.4 341 Z M1362.6 326.4 L1378.2 333.7 L1362.6 341 Z"/>
</g>
<g fill="#555"><rect x="1309.1" y="318.4" width="6.5" height="31.2"/><rect x="1321.3" y="318.4" width="6.5" height="31.2"/></g>
<g fill="none" stroke="#808080" stroke-width="2.1"><path d="M1416 319.6 H1426.3 V324.2 M1416 348.6 H1426.3 V344"/><path d="M1447.4 319.6 H1437.1 V324.2 M1447.4 348.6 H1437.1 V344"/></g>
<path d="M1423 325.8 L1439.6 334 L1423 342.4 Z" fill="#c41010" stroke="#c41010" stroke-width="0.8" stroke-linejoin="round"/>
<defs><linearGradient id="gC" x1="0" y1="0" x2="0" y2="1"><stop offset="0" stop-color="#5e92f4"/><stop offset="1" stop-color="#3467de"/></linearGradient></defs>
<path d="M1320.6 1008.4 L1324.3 999.1" fill="none" stroke="#c2c2ca" stroke-width="3.4" stroke-linecap="round"/>
<circle cx="1317.1" cy="1011.4" r="9" fill="url(#gC)"/>
<path d="M1311.4 1007.8 L1316.9 1017.6 L1324.2 999.4" fill="none" stroke="#fff" stroke-width="2.2" stroke-linecap="round" stroke-linejoin="miter"/>
</svg>
<div class="t" style="top:422.83px;font-size:13.2px;line-height:13.2px;color:#505050;font-family:'Liberation Sans', sans-serif;right:196.50px;-webkit-text-stroke:0.15px #505050;">0</div>
<div class="t" style="top:592.73px;font-size:13.2px;line-height:13.2px;color:#505050;font-family:'Liberation Sans', sans-serif;right:196.50px;-webkit-text-stroke:0.15px #505050;">-20</div>
<div class="t" style="top:766.13px;font-size:13.2px;line-height:13.2px;color:#505050;font-family:'Liberation Sans', sans-serif;right:196.50px;-webkit-text-stroke:0.15px #505050;">-40</div>
<div class="t" style="top:937.43px;font-size:13.2px;line-height:13.2px;color:#505050;font-family:'Liberation Sans', sans-serif;right:196.50px;-webkit-text-stroke:0.15px #505050;">-60</div>
<div class="t" style="top:423.43px;font-size:13.2px;line-height:13.2px;color:#505050;font-family:'Liberation Sans', sans-serif;right:121.00px;-webkit-text-stroke:0.15px #505050;">-5</div>
<div class="t" style="top:479.73px;font-size:13.2px;line-height:13.2px;color:#505050;font-family:'Liberation Sans', sans-serif;right:121.00px;-webkit-text-stroke:0.15px #505050;">-11</div>
<div class="t" style="top:535.83px;font-size:13.2px;line-height:13.2px;color:#505050;font-family:'Liberation Sans', sans-serif;right:121.00px;-webkit-text-stroke:0.15px #505050;">-17</div>
<div class="t" style="top:592.73px;font-size:13.2px;line-height:13.2px;color:#505050;font-family:'Liberation Sans', sans-serif;right:121.00px;-webkit-text-stroke:0.15px #505050;">-23</div>
<div class="t" style="top:937.43px;font-size:13.2px;line-height:13.2px;color:#505050;font-family:'Liberation Sans', sans-serif;right:121.00px;-webkit-text-stroke:0.15px #505050;">-59</div>
<div class="t" style="top:403.13px;font-size:13.2px;line-height:13.2px;color:#505050;font-family:'Liberation Sans', sans-serif;left:1366.00px;-webkit-text-stroke:0.15px #505050;">-16.0 (I)</div>
<div class="t" style="top:957.83px;font-size:13.2px;line-height:13.2px;color:#505050;font-family:'Liberation Sans', sans-serif;left:1114.40px;width:400px;text-align:center;-webkit-text-stroke:0.15px #505050;">L</div>
<div class="t" style="top:957.83px;font-size:13.2px;line-height:13.2px;color:#505050;font-family:'Liberation Sans', sans-serif;left:1128.90px;width:400px;text-align:center;-webkit-text-stroke:0.15px #505050;">R</div>
<div class="t" style="top:957.83px;font-size:13.2px;line-height:13.2px;color:#505050;font-family:'Liberation Sans', sans-serif;left:1189.30px;width:400px;text-align:center;-webkit-text-stroke:0.15px #505050;">M</div>
<div class="t" style="top:1003.44px;font-size:17.2px;line-height:17.2px;color:#404040;font-family:'Liberation Sans', sans-serif;left:1336.00px;">Table Locked</div>
</div></body></html>
